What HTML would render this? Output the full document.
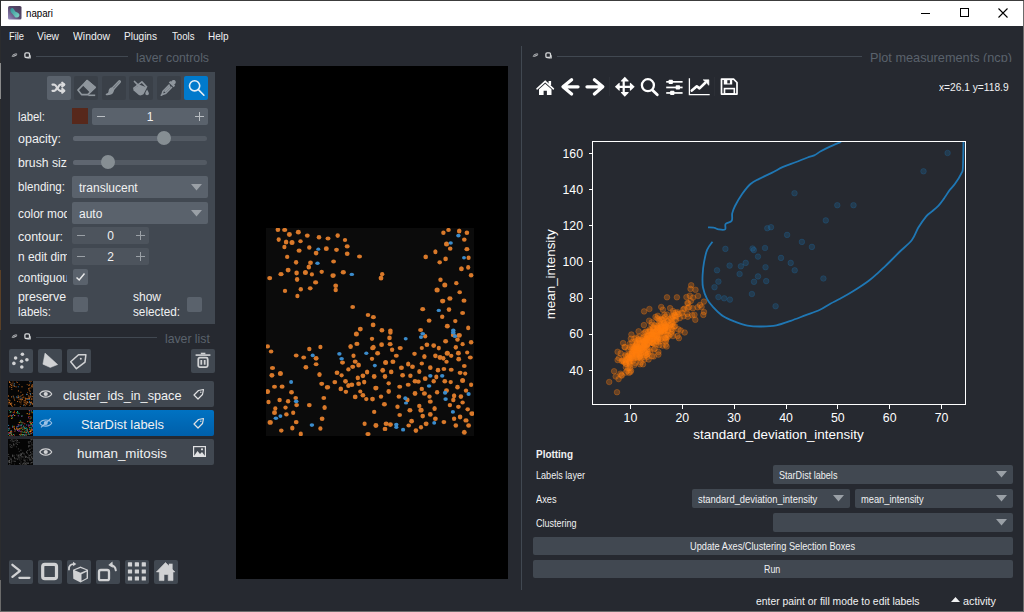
<!DOCTYPE html>
<html><head><meta charset="utf-8"><style>
*{margin:0;padding:0;box-sizing:border-box}
html,body{width:1024px;height:612px;overflow:hidden}
body{position:relative;background:#6b6b6b;font-family:"Liberation Sans",sans-serif;color:#f0f1f2;font-size:12px}
.a{position:absolute}
.t{position:absolute;white-space:nowrap;line-height:1}
svg{position:absolute;overflow:visible}
</style></head><body>
<!-- window -->
<div class="a" style="left:0;top:0;width:1024px;height:1px;background:#3c3c3c"></div>
<div class="a" style="left:1px;top:1px;width:1022px;height:610px;background:#262930"></div>
<div class="a" style="left:0;top:0;width:1px;height:580px;background:#2b2c2e"></div>
<div class="a" style="left:0;top:63px;width:1px;height:36px;background:#8a8a8a"></div>
<div class="a" style="left:0;top:270px;width:1px;height:60px;background:#5a4026"></div>
<!-- title bar -->
<div class="a" style="left:1px;top:1px;width:1022px;height:25px;background:#ffffff"></div>

<svg style="left:8px;top:6px" width="14" height="14" viewBox="0 0 14 14">
 <defs><linearGradient id="ng" x1="1" y1="0" x2="0" y2="1"><stop offset="0" stop-color="#4a3c58"/><stop offset="0.5" stop-color="#574a6e"/><stop offset="1" stop-color="#9a8fc4"/></linearGradient>
 <linearGradient id="nb" x1="0" y1="0" x2="1" y2="1"><stop offset="0" stop-color="#2f8f95"/><stop offset="1" stop-color="#7fd6c6"/></linearGradient></defs>
 <rect x="0" y="0" width="13.5" height="13.5" rx="1.6" fill="url(#ng)"/>
 <path d="M2.3,4.3 C2.2,2.5 4,1.6 5.2,2.4 C6.3,3.1 6.5,4.6 7.3,5.4 C8.2,6.2 10.6,6.3 11.3,8.2 C11.9,10 10.5,11.7 8.7,11.6 C7,11.5 6.2,10 5.4,8.9 C4.6,7.7 2.4,6.5 2.3,4.3Z" fill="url(#nb)"/>
</svg>
<div class="t" style="left:26.00px;top:7.69px;font-size:11px;line-height:11px;transform:scaleX(0.8831);transform-origin:0 0;color:#000;">napari</div>
<div class="a" style="left:921px;top:13px;width:9px;height:1px;background:#000"></div>
<div class="a" style="left:960px;top:8px;width:9px;height:9px;border:1px solid #000"></div>
<svg style="left:998px;top:8px" width="10" height="10" viewBox="0 0 10 10"><path d="M0.5,0.5 L9.5,9.5 M9.5,0.5 L0.5,9.5" stroke="#000" stroke-width="1.1"/></svg>

<!-- menu -->
<div class="t" style="left:9.00px;top:30.69px;font-size:11px;line-height:11px;transform:scaleX(0.8463);transform-origin:0 0;">File</div><div class="t" style="left:37.00px;top:30.69px;font-size:11px;line-height:11px;transform:scaleX(0.9305);transform-origin:0 0;">View</div><div class="t" style="left:73.00px;top:30.69px;font-size:11px;line-height:11px;transform:scaleX(0.9458);transform-origin:0 0;">Window</div><div class="t" style="left:124.00px;top:30.69px;font-size:11px;line-height:11px;transform:scaleX(0.9147);transform-origin:0 0;">Plugins</div><div class="t" style="left:171.50px;top:30.69px;font-size:11px;line-height:11px;transform:scaleX(0.8762);transform-origin:0 0;">Tools</div><div class="t" style="left:207.50px;top:30.69px;font-size:11px;line-height:11px;transform:scaleX(0.9062);transform-origin:0 0;">Help</div>
<svg style="left:11px;top:52px" width="7" height="6" viewBox="0 0 7 6"><path d="M0.6,4.6 C1.5,2 4.5,1 6.3,2 C5.8,4 3,5.2 0.6,4.6Z" fill="#c9cbce"/><path d="M1.5,3.6 L5.5,2.4" stroke="#262930" stroke-width="0.7"/></svg>
<svg style="left:24px;top:52px" width="7" height="7" viewBox="0 0 7 7"><rect x="0.9" y="0.9" width="4.6" height="4.6" rx="1.2" fill="none" stroke="#d8d9db" stroke-width="1.3"/><path d="M3.5,6 H6.3 V3.2" stroke="#c0c2c5" stroke-width="1.1" fill="none"/></svg>
<div class="a" style="left:36px;top:56px;width:92px;height:1px;background:#414851"></div><div class="a" style="left:0;top:40px;width:1024px;height:22px;overflow:hidden"><div class="t" style="left:136.00px;top:10.50px;font-size:13px;line-height:13px;transform:scaleX(0.9443);transform-origin:0 0;color:#5a626c;">layer controls</div></div><div class="a" style="left:10px;top:72px;width:204.5px;height:252px;background:#414851"></div><div class="a" style="left:47px;top:76px;width:24px;height:24px;background:#5a626c;border-radius:2px"></div><div class="a" style="left:74px;top:76px;width:24px;height:24px;background:#3a4048;border-radius:2px"></div><div class="a" style="left:102px;top:76px;width:24px;height:24px;background:#3a4048;border-radius:2px"></div><div class="a" style="left:129px;top:76px;width:24px;height:24px;background:#3a4048;border-radius:2px"></div><div class="a" style="left:157px;top:76px;width:24px;height:24px;background:#3a4048;border-radius:2px"></div><div class="a" style="left:184px;top:76px;width:24px;height:24px;background:#007acc;border-radius:2px"></div>
<svg style="left:47px;top:76px" width="24" height="24" viewBox="0 0 24 24" fill="none" stroke="#d9dadc" stroke-width="2.2" stroke-linecap="round" stroke-linejoin="round">
 <path d="M5.5,8.6 H7.3 C9.6,8.6 10.6,14.8 13.2,14.8 H17"/><path d="M5.5,14.8 H7.3 C8.4,14.8 9.1,13.6 9.7,12.4"/><path d="M11.3,10.9 C11.9,9.7 12.4,8.6 13.3,8.6 H17"/>
 <path d="M15.2,6.7 L17.3,8.6 L15.2,10.5 M15.2,12.9 L17.3,14.8 L15.2,16.7"/>
</svg>
<svg style="left:74.5px;top:76px" width="24" height="24" viewBox="0 0 24 24" fill="none" stroke="#8f969d" stroke-width="1.6" stroke-linejoin="round">
 <path d="M2.9,14.1 L12.1,4.6 L20.1,11.4 L12.8,18.6 L6.5,18.6 Z"/>
 <path d="M12.1,4.6 L20.1,11.4 L15.2,15.6 L8.7,9.2 Z" fill="#8f969d"/>
 <path d="M13.3,19.3 H20.2"/>
</svg>
<svg style="left:102px;top:76px" width="24" height="24" viewBox="0 0 24 24" fill="none" stroke="#8f969d" stroke-width="1.5" stroke-linejoin="round" stroke-linecap="round">
 <path d="M16.8,5.2 C17.6,4.4 18.8,5.4 18.1,6.3 L11.5,13.6 L10,12.3 Z"/>
 <path d="M10,12.3 C8,12.3 7.2,14 7.3,15.5 C7.2,17 6,18 4.4,18.4 C6.5,18.8 9.8,18 10.6,16.2 C11.1,15.2 11.4,14.3 11.5,13.6" fill="#8f969d"/>
</svg>
<svg style="left:129px;top:76px" width="24" height="24" viewBox="0 0 24 24" fill="#8f969d" stroke="none">
 <path d="M4.3,13 L10.8,8.8 L18,11.4 L14.5,18.3 C13,19.5 11,19.7 9.8,19.1 L4.6,14.6 Z"/>
 <path d="M4.3,12.6 L12.9,5.9 L18,11.4" fill="none" stroke="#8f969d" stroke-width="1.6" stroke-linejoin="round"/>
 <path d="M5.5,5.5 L11.4,11.4" stroke="#8f969d" stroke-width="1.7" stroke-linecap="round"/>
 <path d="M18.1,13.6 C17.2,15.4 16.3,16.6 16.3,17.6 C16.3,18.6 17.1,19.2 18.1,19.2 C19.1,19.2 19.9,18.6 19.9,17.6 C19.9,16.6 19,15.4 18.1,13.6Z"/>
</svg>
<svg style="left:157.3px;top:76px" width="24" height="24" viewBox="0 0 24 24" fill="#8f969d" stroke="none">
 <path d="M14.6,4.9 C15.6,3.5 18,3.6 18.6,5.2 C19.3,6.8 18.2,8 17.2,8.6 L18.1,9.7 L16.6,11.2 L11.8,6.6 L13.3,5.1 L14.1,5.8Z"/>
 <path d="M12.6,8.6 L6,15.2 L5,18.4 L4.3,19.3 L5.3,18.6 L8.4,17.6 L15,11" fill="none" stroke="#8f969d" stroke-width="1.6" stroke-linejoin="round"/>
 <path d="M12.6,9.6 L7,15.2 L8.3,16.5 L14,10.9Z"/>
</svg>
<svg style="left:184px;top:76px" width="24" height="24" viewBox="0 0 24 24" fill="none" stroke="#e6eef6" stroke-width="1.6" stroke-linecap="round">
 <circle cx="10.6" cy="9.8" r="5.1"/>
 <path d="M14.4,13.6 L19.9,19.2"/>
</svg>
<div class="t" style="left:18.00px;top:111.14px;font-size:12px;line-height:12px;transform:scaleX(0.9412);transform-origin:0 0;">label:</div><div class="a" style="left:72px;top:108px;width:16px;height:16px;background:#57281b"></div><div class="a" style="left:92px;top:108px;width:116px;height:17px;background:#5a626c;border-radius:2px"></div>
<div class="a" style="left:96.5px;top:116px;width:8px;height:1px;background:#b9bec3"></div><div class="t" style="left:146.66px;top:110.84px;font-size:12px;line-height:12px;transform:scaleX(1.0000);transform-origin:0 0;">1</div>
<div class="a" style="left:195px;top:116px;width:9px;height:1px;background:#b9bec3"></div>
<div class="a" style="left:199px;top:112px;width:1px;height:9px;background:#b9bec3"></div><div class="t" style="left:18.00px;top:132.84px;font-size:12px;line-height:12px;transform:scaleX(1.0398);transform-origin:0 0;">opacity:</div><div class="a" style="left:73px;top:136px;width:134px;height:5px;background:#535a63;border-radius:3px"></div>
<div class="a" style="left:73px;top:136px;width:91px;height:5px;background:#5f6670;border-radius:3px"></div>
<div class="a" style="left:157px;top:131px;width:14px;height:14px;background:#868e93;border-radius:50%"></div><div class="a" style="left:18px;top:150px;width:49px;height:22px;overflow:hidden"><div class="t" style="left:0.00px;top:6.84px;font-size:12px;line-height:12px;transform:scaleX(1.0169);transform-origin:0 0;">brush size:</div></div><div class="a" style="left:73px;top:160px;width:134px;height:5px;background:#535a63;border-radius:3px"></div>
<div class="a" style="left:73px;top:160px;width:35px;height:5px;background:#5f6670;border-radius:3px"></div>
<div class="a" style="left:101px;top:155px;width:14px;height:14px;background:#868e93;border-radius:50%"></div><div class="t" style="left:18.00px;top:181.34px;font-size:12px;line-height:12px;transform:scaleX(0.9650);transform-origin:0 0;">blending:</div><div class="a" style="left:72px;top:176px;width:136px;height:22px;background:#5a626c;border-radius:2px"></div>
<svg style="left:191px;top:184px" width="11" height="7" viewBox="0 0 11 7"><path d="M0,0 H11 L5.5,6.5Z" fill="#9aa0a6"/></svg><div class="t" style="left:79.00px;top:182.24px;font-size:12px;line-height:12px;transform:scaleX(1.0000);transform-origin:0 0;color:#f0f1f2;">translucent</div><div class="a" style="left:18px;top:201px;width:49px;height:22px;overflow:hidden"><div class="t" style="left:0.00px;top:6.84px;font-size:12px;line-height:12px;transform:scaleX(0.9890);transform-origin:0 0;">color mode:</div></div><div class="a" style="left:72px;top:202px;width:136px;height:22px;background:#5a626c;border-radius:2px"></div>
<svg style="left:191px;top:210px" width="11" height="7" viewBox="0 0 11 7"><path d="M0,0 H11 L5.5,6.5Z" fill="#9aa0a6"/></svg><div class="t" style="left:79.00px;top:207.84px;font-size:12px;line-height:12px;transform:scaleX(1.0000);transform-origin:0 0;color:#f0f1f2;">auto</div><div class="t" style="left:18.00px;top:230.54px;font-size:12px;line-height:12px;transform:scaleX(1.0379);transform-origin:0 0;">contour:</div><div class="a" style="left:72px;top:227px;width:77px;height:17px;background:#4d545d;border-radius:2px"></div>
<div class="a" style="left:76.5px;top:235px;width:8px;height:1px;background:#9aa0a6"></div><div class="t" style="left:107.16px;top:230.34px;font-size:12px;line-height:12px;transform:scaleX(1.0000);transform-origin:0 0;">0</div>
<div class="a" style="left:136px;top:235px;width:9px;height:1px;background:#9aa0a6"></div>
<div class="a" style="left:140px;top:231px;width:1px;height:9px;background:#9aa0a6"></div><div class="a" style="left:18px;top:244px;width:49px;height:22px;overflow:hidden"><div class="t" style="left:0.00px;top:7.14px;font-size:12px;line-height:12px;transform:scaleX(0.9936);transform-origin:0 0;">n edit dim:</div></div><div class="a" style="left:72px;top:248px;width:77px;height:17px;background:#4d545d;border-radius:2px"></div>
<div class="a" style="left:76.5px;top:256px;width:8px;height:1px;background:#9aa0a6"></div><div class="t" style="left:107.16px;top:251.34px;font-size:12px;line-height:12px;transform:scaleX(1.0000);transform-origin:0 0;">2</div>
<div class="a" style="left:136px;top:256px;width:9px;height:1px;background:#9aa0a6"></div>
<div class="a" style="left:140px;top:252px;width:1px;height:9px;background:#9aa0a6"></div><div class="a" style="left:18px;top:265px;width:49px;height:22px;overflow:hidden"><div class="t" style="left:0.00px;top:6.84px;font-size:12px;line-height:12px;transform:scaleX(0.9776);transform-origin:0 0;">contiguous:</div></div><div class="a" style="left:73px;top:269px;width:15px;height:16px;background:#5a626c;border-radius:2px"></div><svg style="left:73px;top:269px" width="15" height="16" viewBox="0 0 15 16"><path d="M3.5,8.5 L6.2,11 L11.5,4.5" stroke="#e8e9ea" stroke-width="1.5" fill="none"/></svg><div class="t" style="left:18.00px;top:291.04px;font-size:12px;line-height:12px;transform:scaleX(1.0282);transform-origin:0 0;">preserve</div><div class="t" style="left:18.00px;top:306.34px;font-size:12px;line-height:12px;transform:scaleX(0.9514);transform-origin:0 0;">labels:</div><div class="a" style="left:73px;top:297px;width:15px;height:15px;background:#5a626c;border-radius:2px"></div><div class="t" style="left:133.00px;top:291.04px;font-size:12px;line-height:12px;transform:scaleX(0.9996);transform-origin:0 0;">show</div><div class="t" style="left:133.00px;top:306.34px;font-size:12px;line-height:12px;transform:scaleX(0.9786);transform-origin:0 0;">selected:</div><div class="a" style="left:187px;top:297px;width:15px;height:15px;background:#5a626c;border-radius:2px"></div><svg style="left:11px;top:333px" width="7" height="6" viewBox="0 0 7 6"><path d="M0.6,4.6 C1.5,2 4.5,1 6.3,2 C5.8,4 3,5.2 0.6,4.6Z" fill="#c9cbce"/><path d="M1.5,3.6 L5.5,2.4" stroke="#262930" stroke-width="0.7"/></svg>
<svg style="left:24px;top:333px" width="7" height="7" viewBox="0 0 7 7"><rect x="0.9" y="0.9" width="4.6" height="4.6" rx="1.2" fill="none" stroke="#d8d9db" stroke-width="1.3"/><path d="M3.5,6 H6.3 V3.2" stroke="#c0c2c5" stroke-width="1.1" fill="none"/></svg>
<div class="a" style="left:36px;top:337px;width:121px;height:1px;background:#414851"></div><div class="a" style="left:0;top:321px;width:1024px;height:22px;overflow:hidden"><div class="t" style="left:164.70px;top:10.50px;font-size:13px;line-height:13px;transform:scaleX(0.9397);transform-origin:0 0;color:#5a626c;">layer list</div></div><div class="a" style="left:9px;top:349px;width:24px;height:24px;background:#414851;border-radius:2px"></div><div class="a" style="left:38px;top:349px;width:24px;height:24px;background:#414851;border-radius:2px"></div><div class="a" style="left:67px;top:349px;width:24px;height:24px;background:#414851;border-radius:2px"></div><div class="a" style="left:191px;top:349px;width:24px;height:24px;background:#414851;border-radius:2px"></div>
<svg style="left:9px;top:349px" width="24" height="24" viewBox="0 0 24 24" fill="#d1d2d4">
 <circle cx="13.4" cy="5.3" r="1.8"/><circle cx="6.6" cy="9" r="1.8"/><circle cx="17.9" cy="10.7" r="1.8"/><circle cx="12.6" cy="12.3" r="1.8"/><circle cx="4.9" cy="14.4" r="1.8"/><circle cx="12.8" cy="18" r="1.8"/>
</svg>
<svg style="left:38px;top:349px" width="24" height="24" viewBox="0 0 24 24"><path d="M7,4.1 L19.7,15.6 L12.3,18.5 L4.9,15.2 Z" fill="#d1d2d4" stroke="#d1d2d4" stroke-width="0.5" stroke-linejoin="round"/></svg>
<svg style="left:67px;top:349px" width="24" height="24" viewBox="0 0 24 24" fill="none" stroke="#d1d2d4" stroke-width="1.5" stroke-linejoin="round">
 <path d="M3.7,12.7 L11.5,5.7 L18.9,5.7 L18,13.1 L9.4,19.7 Z"/><circle cx="13.8" cy="9.8" r="1" fill="#d1d2d4" stroke="none"/>
</svg>
<svg style="left:191.4px;top:349px" width="24" height="24" viewBox="0 0 24 24" fill="none" stroke="#d1d2d4">
 <path d="M4.6,6.1 H19.4" stroke-width="1.6"/><path d="M9.8,4.5 H14.4" stroke-width="1.6"/><rect x="7.3" y="8.7" width="9.4" height="9.4" rx="1.5" stroke-width="1.8"/><path d="M10.3,11 V15.8 M13.7,11 V15.8" stroke-width="1.8"/>
</svg>
<div class="a" style="left:33px;top:381px;width:181px;height:26px;background:#414851;border-radius:0 2px 2px 0"></div><div class="a" style="left:8px;top:381px;width:25px;height:26px;background:#050505;overflow:hidden"><svg style="left:0;top:0" width="25" height="26" viewBox="0 0 25 26"><rect x="0.9" y="-0.3" width="1" height="1" fill="#d9792a"/><rect x="4.5" y="0.5" width="1" height="1" fill="#8a4a16"/><rect x="8.1" y="0.5" width="1" height="1" fill="#8a4a16"/><rect x="9.0" y="1.0" width="1" height="1" fill="#8a4a16"/><rect x="1.0" y="0.9" width="1" height="1" fill="#d9792a"/><rect x="1.9" y="1.2" width="1" height="1" fill="#8a4a16"/><rect x="3.5" y="2.3" width="1" height="1" fill="#b8641f"/><rect x="5.5" y="2.6" width="1" height="1" fill="#8a4a16"/><rect x="10.7" y="3.1" width="1" height="1" fill="#8a4a16"/><rect x="2.1" y="3.1" width="1" height="1" fill="#b8641f"/><rect x="3.1" y="3.8" width="1" height="1" fill="#d9792a"/><rect x="4.6" y="4.4" width="1" height="1" fill="#b8641f"/><rect x="1.3" y="5.3" width="1" height="1" fill="#b8641f"/><rect x="6.2" y="5.0" width="1" height="1" fill="#b8641f"/><rect x="7.6" y="5.4" width="1" height="1" fill="#b8641f"/><rect x="3.2" y="5.9" width="1" height="1" fill="#d9792a"/><rect x="3.3" y="8.0" width="1" height="1" fill="#8a4a16"/><rect x="9.9" y="9.4" width="1" height="1" fill="#d9792a"/><rect x="5.8" y="2.2" width="1" height="1" fill="#2f6fa0"/><rect x="5.7" y="3.9" width="1" height="1" fill="#2f6fa0"/><rect x="9.8" y="5.3" width="1" height="1" fill="#2f6fa0"/><rect x="21.4" y="-0.2" width="1" height="1" fill="#d9792a"/><rect x="22.7" y="-0.1" width="1" height="1" fill="#8a4a16"/><rect x="18.7" y="3.1" width="1" height="1" fill="#8a4a16"/><rect x="21.1" y="3.4" width="1" height="1" fill="#b8641f"/><rect x="20.4" y="3.8" width="1" height="1" fill="#d9792a"/><rect x="23.8" y="3.2" width="1" height="1" fill="#b8641f"/><rect x="23.0" y="4.6" width="1" height="1" fill="#d9792a"/><rect x="23.8" y="4.4" width="1" height="1" fill="#b8641f"/><rect x="24.2" y="5.4" width="1" height="1" fill="#b8641f"/><rect x="13.5" y="5.3" width="1" height="1" fill="#d9792a"/><rect x="21.0" y="6.6" width="1" height="1" fill="#8a4a16"/><rect x="22.4" y="6.4" width="1" height="1" fill="#b8641f"/><rect x="20.1" y="7.3" width="1" height="1" fill="#d9792a"/><rect x="20.7" y="8.6" width="1" height="1" fill="#b8641f"/><rect x="21.5" y="9.7" width="1" height="1" fill="#d9792a"/><rect x="19.1" y="11.1" width="1" height="1" fill="#8a4a16"/><rect x="21.3" y="11.8" width="1" height="1" fill="#8a4a16"/><rect x="23.8" y="12.0" width="1" height="1" fill="#8a4a16"/><rect x="12.4" y="10.7" width="1" height="1" fill="#b8641f"/><rect x="21.7" y="1.4" width="1" height="1" fill="#2f6fa0"/><rect x="22.0" y="12.3" width="1" height="1" fill="#2f6fa0"/><rect x="-0.3" y="14.3" width="1" height="1" fill="#d9792a"/><rect x="0.1" y="14.9" width="1" height="1" fill="#8a4a16"/><rect x="4.7" y="14.6" width="1" height="1" fill="#b8641f"/><rect x="3.1" y="15.4" width="1" height="1" fill="#d9792a"/><rect x="5.5" y="16.5" width="1" height="1" fill="#b8641f"/><rect x="0.2" y="17.9" width="1" height="1" fill="#b8641f"/><rect x="5.9" y="17.8" width="1" height="1" fill="#8a4a16"/><rect x="9.7" y="14.3" width="1" height="1" fill="#b8641f"/><rect x="10.0" y="15.5" width="1" height="1" fill="#b8641f"/><rect x="10.2" y="16.2" width="1" height="1" fill="#d9792a"/><rect x="8.7" y="16.3" width="1" height="1" fill="#b8641f"/><rect x="11.7" y="17.5" width="1" height="1" fill="#d9792a"/><rect x="10.5" y="18.2" width="1" height="1" fill="#8a4a16"/><rect x="6.2" y="19.0" width="1" height="1" fill="#8a4a16"/><rect x="9.1" y="20.0" width="1" height="1" fill="#b8641f"/><rect x="0.5" y="19.3" width="1" height="1" fill="#b8641f"/><rect x="1.4" y="19.3" width="1" height="1" fill="#d9792a"/><rect x="11.1" y="20.4" width="1" height="1" fill="#b8641f"/><rect x="-0.2" y="21.3" width="1" height="1" fill="#b8641f"/><rect x="1.1" y="21.0" width="1" height="1" fill="#d9792a"/><rect x="3.2" y="21.6" width="1" height="1" fill="#d9792a"/><rect x="1.8" y="22.0" width="1" height="1" fill="#d9792a"/><rect x="0.5" y="22.6" width="1" height="1" fill="#b8641f"/><rect x="2.0" y="22.8" width="1" height="1" fill="#d9792a"/><rect x="2.8" y="22.6" width="1" height="1" fill="#b8641f"/><rect x="6.2" y="23.3" width="1" height="1" fill="#d9792a"/><rect x="3.1" y="23.8" width="1" height="1" fill="#d9792a"/><rect x="3.7" y="25.2" width="1" height="1" fill="#b8641f"/><rect x="11.8" y="25.2" width="1" height="1" fill="#b8641f"/><rect x="5.1" y="15.4" width="1" height="1" fill="#2f6fa0"/><rect x="8.3" y="15.2" width="1" height="1" fill="#2f6fa0"/><rect x="8.6" y="15.9" width="1" height="1" fill="#2f6fa0"/><rect x="11.5" y="15.2" width="1" height="1" fill="#2f6fa0"/><rect x="14.3" y="13.2" width="1" height="1" fill="#d9792a"/><rect x="13.4" y="14.1" width="1" height="1" fill="#8a4a16"/><rect x="12.3" y="14.5" width="1" height="1" fill="#8a4a16"/><rect x="15.2" y="15.5" width="1" height="1" fill="#8a4a16"/><rect x="13.9" y="16.3" width="1" height="1" fill="#8a4a16"/><rect x="14.8" y="16.2" width="1" height="1" fill="#8a4a16"/><rect x="16.6" y="16.5" width="1" height="1" fill="#8a4a16"/><rect x="17.1" y="16.9" width="1" height="1" fill="#b8641f"/><rect x="13.5" y="17.3" width="1" height="1" fill="#8a4a16"/><rect x="12.5" y="18.1" width="1" height="1" fill="#d9792a"/><rect x="13.8" y="18.1" width="1" height="1" fill="#d9792a"/><rect x="16.9" y="18.0" width="1" height="1" fill="#8a4a16"/><rect x="17.9" y="17.4" width="1" height="1" fill="#d9792a"/><rect x="20.3" y="14.5" width="1" height="1" fill="#d9792a"/><rect x="20.4" y="15.7" width="1" height="1" fill="#8a4a16"/><rect x="20.8" y="15.8" width="1" height="1" fill="#8a4a16"/><rect x="21.8" y="15.5" width="1" height="1" fill="#d9792a"/><rect x="23.3" y="16.7" width="1" height="1" fill="#8a4a16"/><rect x="23.7" y="15.0" width="1" height="1" fill="#b8641f"/><rect x="22.3" y="14.4" width="1" height="1" fill="#b8641f"/><rect x="18.6" y="13.0" width="1" height="1" fill="#b8641f"/><rect x="19.3" y="17.0" width="1" height="1" fill="#b8641f"/><rect x="20.2" y="17.3" width="1" height="1" fill="#b8641f"/><rect x="20.9" y="17.1" width="1" height="1" fill="#d9792a"/><rect x="22.8" y="17.6" width="1" height="1" fill="#b8641f"/><rect x="23.4" y="17.7" width="1" height="1" fill="#b8641f"/><rect x="22.9" y="20.6" width="1" height="1" fill="#d9792a"/><rect x="16.6" y="19.1" width="1" height="1" fill="#d9792a"/><rect x="15.6" y="19.3" width="1" height="1" fill="#b8641f"/><rect x="12.7" y="19.5" width="1" height="1" fill="#b8641f"/><rect x="12.3" y="20.9" width="1" height="1" fill="#8a4a16"/><rect x="15.5" y="20.6" width="1" height="1" fill="#8a4a16"/><rect x="16.5" y="21.0" width="1" height="1" fill="#b8641f"/><rect x="17.4" y="20.2" width="1" height="1" fill="#8a4a16"/><rect x="18.5" y="20.2" width="1" height="1" fill="#8a4a16"/><rect x="19.1" y="20.6" width="1" height="1" fill="#d9792a"/><rect x="19.3" y="21.2" width="1" height="1" fill="#d9792a"/><rect x="21.2" y="19.8" width="1" height="1" fill="#b8641f"/><rect x="23.1" y="21.3" width="1" height="1" fill="#b8641f"/><rect x="21.6" y="21.6" width="1" height="1" fill="#b8641f"/><rect x="23.7" y="22.2" width="1" height="1" fill="#d9792a"/><rect x="24.3" y="22.7" width="1" height="1" fill="#d9792a"/><rect x="17.9" y="21.7" width="1" height="1" fill="#d9792a"/><rect x="16.8" y="22.3" width="1" height="1" fill="#8a4a16"/><rect x="12.5" y="22.5" width="1" height="1" fill="#8a4a16"/><rect x="15.6" y="22.9" width="1" height="1" fill="#d9792a"/><rect x="18.3" y="23.0" width="1" height="1" fill="#8a4a16"/><rect x="22.1" y="23.3" width="1" height="1" fill="#8a4a16"/><rect x="16.7" y="24.2" width="1" height="1" fill="#b8641f"/><rect x="20.9" y="23.8" width="1" height="1" fill="#8a4a16"/><rect x="22.0" y="21.0" width="1" height="1" fill="#b8641f"/><rect x="22.0" y="12.9" width="1" height="1" fill="#b8641f"/><rect x="18.1" y="13.1" width="1" height="1" fill="#2f6fa0"/><rect x="18.3" y="12.7" width="1" height="1" fill="#2f6fa0"/><rect x="12.6" y="16.7" width="1" height="1" fill="#2f6fa0"/><rect x="19.3" y="18.0" width="1" height="1" fill="#2f6fa0"/><rect x="20.7" y="18.0" width="1" height="1" fill="#2f6fa0"/><rect x="21.0" y="20.1" width="1" height="1" fill="#2f6fa0"/><rect x="21.1" y="20.9" width="1" height="1" fill="#2f6fa0"/><rect x="22.0" y="22.5" width="1" height="1" fill="#2f6fa0"/><rect x="15.2" y="24.1" width="1" height="1" fill="#2f6fa0"/><rect x="22.0" y="12.6" width="1" height="1" fill="#2f6fa0"/></svg></div><div class="t" style="left:62.75px;top:388.80px;font-size:13px;line-height:13px;transform:scaleX(0.9761);transform-origin:0 0;">cluster_ids_in_space</div><svg style="left:39px;top:388px" width="14" height="12" viewBox="0 0 14 12" fill="none" stroke="#d1d2d4" stroke-width="1.2"><path d="M0.8,6 C3,1.8 10.5,1.8 12.7,6 C10.5,10.2 3,10.2 0.8,6Z"/><circle cx="6.75" cy="6" r="2.1" fill="#d1d2d4" stroke="none"/></svg><svg style="left:193px;top:388px" width="12" height="12" viewBox="0 0 12 12" fill="none" stroke="#e0e1e3" stroke-width="1.2" stroke-linejoin="round"><path d="M1,7 L5.5,2.5 L10.5,1.5 L9.5,6.5 L5,11 Z"/><circle cx="7.8" cy="4.2" r="0.7" fill="#e0e1e3" stroke="none"/></svg><div class="a" style="left:33px;top:410px;width:181px;height:26px;background:linear-gradient(#0072c2,#005fa9);border-radius:0 2px 2px 0"></div><div class="a" style="left:8px;top:410px;width:25px;height:26px;background:#050505;overflow:hidden"><svg style="left:0;top:0" width="25" height="26" viewBox="0 0 25 26"><rect x="0.9" y="-0.3" width="1" height="1" fill="#16a085"/><rect x="5.9" y="0.7" width="1" height="1" fill="#d35400"/><rect x="9.0" y="1.0" width="1" height="1" fill="#16a085"/><rect x="1.9" y="1.2" width="1" height="1" fill="#e74c3c"/><rect x="2.6" y="1.3" width="1" height="1" fill="#27ae60"/><rect x="1.7" y="1.9" width="1" height="1" fill="#27ae60"/><rect x="4.7" y="1.9" width="1" height="1" fill="#c0392b"/><rect x="8.0" y="2.2" width="1" height="1" fill="#d35400"/><rect x="9.3" y="1.8" width="1" height="1" fill="#16a085"/><rect x="9.3" y="2.7" width="1" height="1" fill="#27ae60"/><rect x="10.7" y="3.1" width="1" height="1" fill="#27ae60"/><rect x="4.9" y="3.9" width="1" height="1" fill="#8e44ad"/><rect x="2.2" y="4.8" width="1" height="1" fill="#16a085"/><rect x="1.3" y="5.3" width="1" height="1" fill="#d35400"/><rect x="3.2" y="5.1" width="1" height="1" fill="#e74c3c"/><rect x="4.2" y="5.1" width="1" height="1" fill="#2e86c1"/><rect x="6.2" y="5.0" width="1" height="1" fill="#f39c12"/><rect x="-0.1" y="5.8" width="1" height="1" fill="#d35400"/><rect x="3.2" y="5.9" width="1" height="1" fill="#c0392b"/><rect x="3.7" y="7.1" width="1" height="1" fill="#27ae60"/><rect x="3.3" y="8.0" width="1" height="1" fill="#f39c12"/><rect x="11.8" y="10.4" width="1" height="1" fill="#16a085"/><rect x="10.8" y="12.1" width="1" height="1" fill="#f39c12"/><rect x="5.8" y="2.2" width="1" height="1" fill="#d35400"/><rect x="9.8" y="5.3" width="1" height="1" fill="#8e44ad"/><rect x="20.8" y="0.1" width="1" height="1" fill="#e74c3c"/><rect x="22.7" y="-0.1" width="1" height="1" fill="#8e44ad"/><rect x="23.3" y="0.9" width="1" height="1" fill="#27ae60"/><rect x="21.2" y="1.5" width="1" height="1" fill="#2e86c1"/><rect x="23.6" y="2.2" width="1" height="1" fill="#f39c12"/><rect x="18.7" y="3.1" width="1" height="1" fill="#f39c12"/><rect x="21.1" y="3.4" width="1" height="1" fill="#f39c12"/><rect x="20.4" y="3.8" width="1" height="1" fill="#c0392b"/><rect x="13.5" y="5.3" width="1" height="1" fill="#27ae60"/><rect x="13.3" y="5.8" width="1" height="1" fill="#8e44ad"/><rect x="20.5" y="6.0" width="1" height="1" fill="#d35400"/><rect x="22.4" y="6.4" width="1" height="1" fill="#d35400"/><rect x="20.1" y="7.3" width="1" height="1" fill="#8e44ad"/><rect x="22.8" y="7.5" width="1" height="1" fill="#27ae60"/><rect x="21.6" y="8.3" width="1" height="1" fill="#e74c3c"/><rect x="20.7" y="10.6" width="1" height="1" fill="#d35400"/><rect x="19.1" y="11.1" width="1" height="1" fill="#e74c3c"/><rect x="22.3" y="11.1" width="1" height="1" fill="#27ae60"/><rect x="21.3" y="11.8" width="1" height="1" fill="#16a085"/><rect x="23.8" y="12.0" width="1" height="1" fill="#e74c3c"/><rect x="12.4" y="11.6" width="1" height="1" fill="#f39c12"/><rect x="13.4" y="12.3" width="1" height="1" fill="#27ae60"/><rect x="14.5" y="12.4" width="1" height="1" fill="#e74c3c"/><rect x="22.0" y="12.3" width="1" height="1" fill="#e74c3c"/><rect x="0.1" y="14.9" width="1" height="1" fill="#2e86c1"/><rect x="4.0" y="15.7" width="1" height="1" fill="#16a085"/><rect x="5.5" y="15.8" width="1" height="1" fill="#f39c12"/><rect x="5.5" y="16.5" width="1" height="1" fill="#d35400"/><rect x="4.3" y="16.9" width="1" height="1" fill="#8e44ad"/><rect x="1.2" y="17.7" width="1" height="1" fill="#e74c3c"/><rect x="0.2" y="17.9" width="1" height="1" fill="#2e86c1"/><rect x="5.9" y="17.8" width="1" height="1" fill="#f39c12"/><rect x="9.7" y="14.3" width="1" height="1" fill="#8e44ad"/><rect x="10.4" y="14.0" width="1" height="1" fill="#c0392b"/><rect x="10.0" y="15.5" width="1" height="1" fill="#2e86c1"/><rect x="8.7" y="16.3" width="1" height="1" fill="#2e86c1"/><rect x="8.0" y="17.6" width="1" height="1" fill="#f39c12"/><rect x="8.6" y="17.9" width="1" height="1" fill="#d35400"/><rect x="11.1" y="18.0" width="1" height="1" fill="#d35400"/><rect x="10.5" y="18.2" width="1" height="1" fill="#e74c3c"/><rect x="11.3" y="18.8" width="1" height="1" fill="#27ae60"/><rect x="9.8" y="19.1" width="1" height="1" fill="#d35400"/><rect x="9.1" y="18.7" width="1" height="1" fill="#16a085"/><rect x="9.4" y="19.2" width="1" height="1" fill="#e74c3c"/><rect x="7.8" y="18.8" width="1" height="1" fill="#c0392b"/><rect x="6.2" y="19.0" width="1" height="1" fill="#c0392b"/><rect x="6.9" y="19.4" width="1" height="1" fill="#16a085"/><rect x="9.1" y="20.0" width="1" height="1" fill="#8e44ad"/><rect x="0.5" y="19.3" width="1" height="1" fill="#16a085"/><rect x="-0.3" y="19.9" width="1" height="1" fill="#16a085"/><rect x="2.6" y="20.0" width="1" height="1" fill="#2e86c1"/><rect x="3.1" y="20.7" width="1" height="1" fill="#c0392b"/><rect x="11.1" y="20.4" width="1" height="1" fill="#8e44ad"/><rect x="10.2" y="20.6" width="1" height="1" fill="#8e44ad"/><rect x="6.4" y="20.7" width="1" height="1" fill="#e74c3c"/><rect x="2.2" y="21.2" width="1" height="1" fill="#f39c12"/><rect x="3.2" y="21.6" width="1" height="1" fill="#e74c3c"/><rect x="1.8" y="22.0" width="1" height="1" fill="#2e86c1"/><rect x="0.6" y="22.1" width="1" height="1" fill="#e74c3c"/><rect x="0.5" y="22.6" width="1" height="1" fill="#e74c3c"/><rect x="2.0" y="22.8" width="1" height="1" fill="#d35400"/><rect x="2.8" y="22.6" width="1" height="1" fill="#27ae60"/><rect x="3.1" y="23.8" width="1" height="1" fill="#f39c12"/><rect x="0.0" y="23.8" width="1" height="1" fill="#16a085"/><rect x="2.7" y="24.5" width="1" height="1" fill="#2e86c1"/><rect x="6.0" y="24.6" width="1" height="1" fill="#c0392b"/><rect x="1.3" y="24.8" width="1" height="1" fill="#f39c12"/><rect x="3.7" y="25.2" width="1" height="1" fill="#e74c3c"/><rect x="11.3" y="24.0" width="1" height="1" fill="#e74c3c"/><rect x="11.8" y="25.2" width="1" height="1" fill="#16a085"/><rect x="8.6" y="15.9" width="1" height="1" fill="#8e44ad"/><rect x="11.5" y="15.2" width="1" height="1" fill="#2e86c1"/><rect x="1.2" y="23.0" width="1" height="1" fill="#8e44ad"/><rect x="5.0" y="24.1" width="1" height="1" fill="#27ae60"/><rect x="13.4" y="14.1" width="1" height="1" fill="#27ae60"/><rect x="12.3" y="14.5" width="1" height="1" fill="#16a085"/><rect x="12.9" y="15.2" width="1" height="1" fill="#8e44ad"/><rect x="15.2" y="15.5" width="1" height="1" fill="#2e86c1"/><rect x="14.8" y="16.2" width="1" height="1" fill="#16a085"/><rect x="15.8" y="17.0" width="1" height="1" fill="#27ae60"/><rect x="16.6" y="16.5" width="1" height="1" fill="#c0392b"/><rect x="13.5" y="17.3" width="1" height="1" fill="#27ae60"/><rect x="14.6" y="17.5" width="1" height="1" fill="#c0392b"/><rect x="12.5" y="18.1" width="1" height="1" fill="#f39c12"/><rect x="15.9" y="17.9" width="1" height="1" fill="#16a085"/><rect x="16.9" y="18.0" width="1" height="1" fill="#2e86c1"/><rect x="17.9" y="17.4" width="1" height="1" fill="#16a085"/><rect x="18.2" y="14.5" width="1" height="1" fill="#2e86c1"/><rect x="20.3" y="14.5" width="1" height="1" fill="#8e44ad"/><rect x="19.9" y="15.5" width="1" height="1" fill="#8e44ad"/><rect x="21.3" y="15.2" width="1" height="1" fill="#e74c3c"/><rect x="23.3" y="16.7" width="1" height="1" fill="#16a085"/><rect x="23.7" y="15.0" width="1" height="1" fill="#8e44ad"/><rect x="24.0" y="15.7" width="1" height="1" fill="#8e44ad"/><rect x="24.2" y="13.8" width="1" height="1" fill="#16a085"/><rect x="23.1" y="14.0" width="1" height="1" fill="#16a085"/><rect x="22.3" y="14.4" width="1" height="1" fill="#16a085"/><rect x="22.5" y="13.5" width="1" height="1" fill="#d35400"/><rect x="22.7" y="12.9" width="1" height="1" fill="#f39c12"/><rect x="20.9" y="17.1" width="1" height="1" fill="#d35400"/><rect x="21.8" y="17.2" width="1" height="1" fill="#27ae60"/><rect x="23.4" y="17.7" width="1" height="1" fill="#2e86c1"/><rect x="23.1" y="18.6" width="1" height="1" fill="#d35400"/><rect x="24.2" y="19.1" width="1" height="1" fill="#8e44ad"/><rect x="22.5" y="19.4" width="1" height="1" fill="#f39c12"/><rect x="23.5" y="19.8" width="1" height="1" fill="#f39c12"/><rect x="22.9" y="20.6" width="1" height="1" fill="#c0392b"/><rect x="22.1" y="20.5" width="1" height="1" fill="#f39c12"/><rect x="21.0" y="18.7" width="1" height="1" fill="#16a085"/><rect x="18.6" y="18.3" width="1" height="1" fill="#27ae60"/><rect x="17.8" y="18.7" width="1" height="1" fill="#27ae60"/><rect x="15.6" y="19.3" width="1" height="1" fill="#d35400"/><rect x="14.2" y="18.9" width="1" height="1" fill="#27ae60"/><rect x="13.3" y="20.6" width="1" height="1" fill="#d35400"/><rect x="12.3" y="20.9" width="1" height="1" fill="#8e44ad"/><rect x="13.7" y="21.5" width="1" height="1" fill="#27ae60"/><rect x="17.4" y="20.2" width="1" height="1" fill="#16a085"/><rect x="18.5" y="20.2" width="1" height="1" fill="#16a085"/><rect x="19.1" y="20.6" width="1" height="1" fill="#8e44ad"/><rect x="19.3" y="21.2" width="1" height="1" fill="#27ae60"/><rect x="21.6" y="21.6" width="1" height="1" fill="#c0392b"/><rect x="23.7" y="22.2" width="1" height="1" fill="#e74c3c"/><rect x="19.8" y="22.1" width="1" height="1" fill="#16a085"/><rect x="17.9" y="21.7" width="1" height="1" fill="#e74c3c"/><rect x="18.1" y="22.3" width="1" height="1" fill="#e74c3c"/><rect x="16.8" y="22.3" width="1" height="1" fill="#16a085"/><rect x="15.3" y="21.8" width="1" height="1" fill="#27ae60"/><rect x="12.5" y="22.5" width="1" height="1" fill="#d35400"/><rect x="19.9" y="23.3" width="1" height="1" fill="#16a085"/><rect x="22.1" y="23.3" width="1" height="1" fill="#d35400"/><rect x="22.8" y="23.1" width="1" height="1" fill="#2e86c1"/><rect x="16.7" y="24.2" width="1" height="1" fill="#16a085"/><rect x="14.5" y="24.1" width="1" height="1" fill="#e74c3c"/><rect x="12.7" y="24.2" width="1" height="1" fill="#f39c12"/><rect x="13.9" y="24.0" width="1" height="1" fill="#16a085"/><rect x="13.8" y="24.6" width="1" height="1" fill="#27ae60"/><rect x="17.5" y="24.8" width="1" height="1" fill="#d35400"/><rect x="18.1" y="24.4" width="1" height="1" fill="#16a085"/><rect x="20.9" y="23.8" width="1" height="1" fill="#16a085"/><rect x="22.0" y="21.0" width="1" height="1" fill="#f39c12"/><rect x="16.3" y="13.3" width="1" height="1" fill="#e74c3c"/><rect x="12.6" y="16.7" width="1" height="1" fill="#c0392b"/><rect x="19.1" y="19.3" width="1" height="1" fill="#e74c3c"/><rect x="21.1" y="20.9" width="1" height="1" fill="#d35400"/><rect x="16.3" y="21.4" width="1" height="1" fill="#f39c12"/><rect x="19.7" y="23.9" width="1" height="1" fill="#c0392b"/><rect x="15.2" y="24.1" width="1" height="1" fill="#2e86c1"/><rect x="15.2" y="24.4" width="1" height="1" fill="#d35400"/><rect x="16.0" y="24.7" width="1" height="1" fill="#2e86c1"/></svg></div><div class="t" style="left:80.50px;top:417.80px;font-size:13px;line-height:13px;transform:scaleX(0.9904);transform-origin:0 0;">StarDist labels</div><svg style="left:39px;top:417px" width="14" height="12" viewBox="0 0 14 12" fill="none" stroke="#9ec3e6" stroke-width="1.1"><path d="M0.8,6 C3,1.9 10.5,1.9 12.7,6 C10.5,10.1 3,10.1 0.8,6Z"/><circle cx="6.75" cy="6" r="2" fill="#9ec3e6" stroke="none"/><path d="M2,10.3 L11.8,1.5"/></svg><svg style="left:193px;top:417px" width="12" height="12" viewBox="0 0 12 12" fill="none" stroke="#e0e1e3" stroke-width="1.2" stroke-linejoin="round"><path d="M1,7 L5.5,2.5 L10.5,1.5 L9.5,6.5 L5,11 Z"/><circle cx="7.8" cy="4.2" r="0.7" fill="#e0e1e3" stroke="none"/></svg><div class="a" style="left:33px;top:439px;width:181px;height:26px;background:#414851;border-radius:0 2px 2px 0"></div><div class="a" style="left:8px;top:439px;width:25px;height:26px;background:#050505;overflow:hidden"><svg style="left:0;top:0" width="25" height="26" viewBox="0 0 25 26"><rect x="3.4" y="0.0" width="1" height="1" fill="#4a4a4a"/><rect x="4.5" y="0.5" width="1" height="1" fill="#2a2a2a"/><rect x="5.9" y="0.7" width="1" height="1" fill="#2a2a2a"/><rect x="7.0" y="0.8" width="1" height="1" fill="#3a3a3a"/><rect x="8.1" y="0.5" width="1" height="1" fill="#4a4a4a"/><rect x="9.0" y="1.0" width="1" height="1" fill="#4a4a4a"/><rect x="1.9" y="1.2" width="1" height="1" fill="#3a3a3a"/><rect x="3.6" y="1.2" width="1" height="1" fill="#3a3a3a"/><rect x="3.5" y="2.3" width="1" height="1" fill="#2a2a2a"/><rect x="4.7" y="1.9" width="1" height="1" fill="#606060"/><rect x="8.0" y="2.2" width="1" height="1" fill="#2a2a2a"/><rect x="9.3" y="2.7" width="1" height="1" fill="#4a4a4a"/><rect x="10.7" y="3.1" width="1" height="1" fill="#3a3a3a"/><rect x="4.9" y="3.9" width="1" height="1" fill="#3a3a3a"/><rect x="7.6" y="3.7" width="1" height="1" fill="#606060"/><rect x="2.2" y="4.8" width="1" height="1" fill="#2a2a2a"/><rect x="1.3" y="5.3" width="1" height="1" fill="#4a4a4a"/><rect x="5.0" y="5.3" width="1" height="1" fill="#606060"/><rect x="6.2" y="5.0" width="1" height="1" fill="#2a2a2a"/><rect x="8.8" y="5.0" width="1" height="1" fill="#4a4a4a"/><rect x="3.2" y="5.9" width="1" height="1" fill="#4a4a4a"/><rect x="5.5" y="6.3" width="1" height="1" fill="#3a3a3a"/><rect x="7.9" y="7.3" width="1" height="1" fill="#3a3a3a"/><rect x="1.8" y="7.4" width="1" height="1" fill="#606060"/><rect x="3.7" y="7.1" width="1" height="1" fill="#2a2a2a"/><rect x="3.3" y="8.0" width="1" height="1" fill="#4a4a4a"/><rect x="9.9" y="9.4" width="1" height="1" fill="#4a4a4a"/><rect x="10.8" y="12.1" width="1" height="1" fill="#3a3a3a"/><rect x="5.8" y="2.2" width="1" height="1" fill="#2a2a2a"/><rect x="22.7" y="-0.1" width="1" height="1" fill="#606060"/><rect x="23.6" y="0.1" width="1" height="1" fill="#4a4a4a"/><rect x="21.6" y="2.1" width="1" height="1" fill="#606060"/><rect x="19.9" y="2.5" width="1" height="1" fill="#606060"/><rect x="21.1" y="3.4" width="1" height="1" fill="#2a2a2a"/><rect x="20.4" y="3.8" width="1" height="1" fill="#3a3a3a"/><rect x="23.0" y="4.6" width="1" height="1" fill="#3a3a3a"/><rect x="24.2" y="5.4" width="1" height="1" fill="#3a3a3a"/><rect x="20.5" y="6.0" width="1" height="1" fill="#606060"/><rect x="21.0" y="6.6" width="1" height="1" fill="#3a3a3a"/><rect x="22.4" y="6.4" width="1" height="1" fill="#4a4a4a"/><rect x="20.1" y="7.3" width="1" height="1" fill="#606060"/><rect x="23.3" y="8.6" width="1" height="1" fill="#4a4a4a"/><rect x="21.5" y="9.7" width="1" height="1" fill="#606060"/><rect x="20.7" y="10.6" width="1" height="1" fill="#4a4a4a"/><rect x="19.1" y="11.1" width="1" height="1" fill="#4a4a4a"/><rect x="23.8" y="12.0" width="1" height="1" fill="#2a2a2a"/><rect x="18.1" y="12.2" width="1" height="1" fill="#4a4a4a"/><rect x="12.4" y="10.7" width="1" height="1" fill="#606060"/><rect x="22.6" y="0.5" width="1" height="1" fill="#4a4a4a"/><rect x="23.3" y="3.2" width="1" height="1" fill="#2a2a2a"/><rect x="0.1" y="14.9" width="1" height="1" fill="#4a4a4a"/><rect x="4.0" y="15.7" width="1" height="1" fill="#606060"/><rect x="5.5" y="15.8" width="1" height="1" fill="#4a4a4a"/><rect x="4.3" y="16.9" width="1" height="1" fill="#606060"/><rect x="0.3" y="17.0" width="1" height="1" fill="#4a4a4a"/><rect x="1.2" y="17.7" width="1" height="1" fill="#2a2a2a"/><rect x="5.9" y="17.8" width="1" height="1" fill="#606060"/><rect x="10.0" y="15.5" width="1" height="1" fill="#3a3a3a"/><rect x="10.2" y="16.2" width="1" height="1" fill="#606060"/><rect x="8.7" y="16.3" width="1" height="1" fill="#2a2a2a"/><rect x="9.9" y="16.9" width="1" height="1" fill="#3a3a3a"/><rect x="10.6" y="16.6" width="1" height="1" fill="#4a4a4a"/><rect x="9.4" y="17.2" width="1" height="1" fill="#2a2a2a"/><rect x="10.5" y="18.2" width="1" height="1" fill="#606060"/><rect x="11.3" y="18.8" width="1" height="1" fill="#2a2a2a"/><rect x="9.4" y="19.2" width="1" height="1" fill="#4a4a4a"/><rect x="7.8" y="18.8" width="1" height="1" fill="#2a2a2a"/><rect x="6.2" y="19.0" width="1" height="1" fill="#4a4a4a"/><rect x="6.9" y="19.4" width="1" height="1" fill="#2a2a2a"/><rect x="8.5" y="19.6" width="1" height="1" fill="#2a2a2a"/><rect x="9.1" y="20.0" width="1" height="1" fill="#3a3a3a"/><rect x="1.4" y="19.3" width="1" height="1" fill="#3a3a3a"/><rect x="2.6" y="20.0" width="1" height="1" fill="#606060"/><rect x="3.1" y="20.7" width="1" height="1" fill="#2a2a2a"/><rect x="10.8" y="19.9" width="1" height="1" fill="#2a2a2a"/><rect x="11.5" y="20.9" width="1" height="1" fill="#2a2a2a"/><rect x="6.4" y="20.7" width="1" height="1" fill="#2a2a2a"/><rect x="-0.2" y="21.3" width="1" height="1" fill="#4a4a4a"/><rect x="1.1" y="21.0" width="1" height="1" fill="#606060"/><rect x="3.2" y="21.6" width="1" height="1" fill="#4a4a4a"/><rect x="4.7" y="21.6" width="1" height="1" fill="#3a3a3a"/><rect x="6.5" y="22.0" width="1" height="1" fill="#606060"/><rect x="0.6" y="22.1" width="1" height="1" fill="#606060"/><rect x="0.5" y="22.6" width="1" height="1" fill="#606060"/><rect x="2.8" y="22.6" width="1" height="1" fill="#4a4a4a"/><rect x="3.1" y="23.8" width="1" height="1" fill="#2a2a2a"/><rect x="6.0" y="24.6" width="1" height="1" fill="#2a2a2a"/><rect x="1.3" y="24.8" width="1" height="1" fill="#4a4a4a"/><rect x="11.3" y="24.0" width="1" height="1" fill="#606060"/><rect x="11.8" y="25.2" width="1" height="1" fill="#3a3a3a"/><rect x="8.3" y="15.2" width="1" height="1" fill="#3a3a3a"/><rect x="8.6" y="15.9" width="1" height="1" fill="#2a2a2a"/><rect x="11.5" y="15.2" width="1" height="1" fill="#4a4a4a"/><rect x="2.5" y="18.8" width="1" height="1" fill="#4a4a4a"/><rect x="1.2" y="23.0" width="1" height="1" fill="#606060"/><rect x="14.3" y="13.2" width="1" height="1" fill="#4a4a4a"/><rect x="13.4" y="14.1" width="1" height="1" fill="#4a4a4a"/><rect x="14.4" y="14.0" width="1" height="1" fill="#3a3a3a"/><rect x="12.9" y="15.2" width="1" height="1" fill="#606060"/><rect x="15.6" y="14.5" width="1" height="1" fill="#606060"/><rect x="12.2" y="15.9" width="1" height="1" fill="#606060"/><rect x="16.6" y="16.5" width="1" height="1" fill="#4a4a4a"/><rect x="17.1" y="16.9" width="1" height="1" fill="#4a4a4a"/><rect x="13.5" y="17.3" width="1" height="1" fill="#606060"/><rect x="14.6" y="17.5" width="1" height="1" fill="#4a4a4a"/><rect x="12.5" y="18.1" width="1" height="1" fill="#2a2a2a"/><rect x="16.9" y="18.0" width="1" height="1" fill="#4a4a4a"/><rect x="17.9" y="17.4" width="1" height="1" fill="#606060"/><rect x="18.8" y="14.1" width="1" height="1" fill="#3a3a3a"/><rect x="19.9" y="15.5" width="1" height="1" fill="#3a3a3a"/><rect x="21.8" y="15.5" width="1" height="1" fill="#606060"/><rect x="21.2" y="16.2" width="1" height="1" fill="#606060"/><rect x="22.6" y="15.2" width="1" height="1" fill="#4a4a4a"/><rect x="23.3" y="16.7" width="1" height="1" fill="#3a3a3a"/><rect x="23.7" y="15.0" width="1" height="1" fill="#2a2a2a"/><rect x="24.2" y="13.8" width="1" height="1" fill="#2a2a2a"/><rect x="23.1" y="14.0" width="1" height="1" fill="#2a2a2a"/><rect x="18.6" y="13.0" width="1" height="1" fill="#2a2a2a"/><rect x="20.2" y="17.3" width="1" height="1" fill="#2a2a2a"/><rect x="22.8" y="17.6" width="1" height="1" fill="#4a4a4a"/><rect x="23.4" y="17.7" width="1" height="1" fill="#606060"/><rect x="24.2" y="19.1" width="1" height="1" fill="#606060"/><rect x="22.5" y="19.4" width="1" height="1" fill="#4a4a4a"/><rect x="22.9" y="20.6" width="1" height="1" fill="#2a2a2a"/><rect x="22.1" y="20.5" width="1" height="1" fill="#606060"/><rect x="21.0" y="18.7" width="1" height="1" fill="#3a3a3a"/><rect x="19.7" y="18.7" width="1" height="1" fill="#3a3a3a"/><rect x="15.6" y="19.3" width="1" height="1" fill="#2a2a2a"/><rect x="12.7" y="19.5" width="1" height="1" fill="#3a3a3a"/><rect x="15.5" y="20.6" width="1" height="1" fill="#606060"/><rect x="16.5" y="21.0" width="1" height="1" fill="#2a2a2a"/><rect x="17.4" y="20.2" width="1" height="1" fill="#2a2a2a"/><rect x="19.1" y="20.6" width="1" height="1" fill="#2a2a2a"/><rect x="21.2" y="19.8" width="1" height="1" fill="#4a4a4a"/><rect x="24.3" y="22.7" width="1" height="1" fill="#606060"/><rect x="16.8" y="22.3" width="1" height="1" fill="#3a3a3a"/><rect x="12.5" y="22.5" width="1" height="1" fill="#4a4a4a"/><rect x="15.6" y="22.9" width="1" height="1" fill="#4a4a4a"/><rect x="18.3" y="23.0" width="1" height="1" fill="#3a3a3a"/><rect x="19.3" y="22.8" width="1" height="1" fill="#2a2a2a"/><rect x="19.9" y="23.3" width="1" height="1" fill="#2a2a2a"/><rect x="22.8" y="23.1" width="1" height="1" fill="#606060"/><rect x="17.0" y="23.7" width="1" height="1" fill="#2a2a2a"/><rect x="16.7" y="24.2" width="1" height="1" fill="#606060"/><rect x="13.8" y="24.6" width="1" height="1" fill="#606060"/><rect x="17.5" y="24.8" width="1" height="1" fill="#606060"/><rect x="18.1" y="24.4" width="1" height="1" fill="#3a3a3a"/><rect x="18.7" y="24.0" width="1" height="1" fill="#3a3a3a"/><rect x="22.3" y="24.2" width="1" height="1" fill="#3a3a3a"/><rect x="22.0" y="21.0" width="1" height="1" fill="#2a2a2a"/><rect x="12.4" y="14.4" width="1" height="1" fill="#606060"/><rect x="18.1" y="13.1" width="1" height="1" fill="#4a4a4a"/><rect x="12.6" y="16.7" width="1" height="1" fill="#4a4a4a"/><rect x="19.3" y="18.0" width="1" height="1" fill="#4a4a4a"/><rect x="20.7" y="18.0" width="1" height="1" fill="#3a3a3a"/><rect x="21.0" y="20.1" width="1" height="1" fill="#3a3a3a"/><rect x="23.8" y="20.3" width="1" height="1" fill="#2a2a2a"/><rect x="21.1" y="20.9" width="1" height="1" fill="#2a2a2a"/><rect x="16.2" y="20.8" width="1" height="1" fill="#3a3a3a"/><rect x="16.3" y="21.4" width="1" height="1" fill="#4a4a4a"/><rect x="19.7" y="23.9" width="1" height="1" fill="#606060"/><rect x="15.2" y="24.1" width="1" height="1" fill="#606060"/><rect x="15.2" y="24.4" width="1" height="1" fill="#3a3a3a"/><rect x="16.0" y="24.7" width="1" height="1" fill="#3a3a3a"/><rect x="22.0" y="12.6" width="1" height="1" fill="#3a3a3a"/><rect x="22.2" y="13.0" width="1" height="1" fill="#4a4a4a"/></svg></div><div class="t" style="left:77.00px;top:446.80px;font-size:13px;line-height:13px;transform:scaleX(1.0295);transform-origin:0 0;">human_mitosis</div><svg style="left:39px;top:446px" width="14" height="12" viewBox="0 0 14 12" fill="none" stroke="#d1d2d4" stroke-width="1.2"><path d="M0.8,6 C3,1.8 10.5,1.8 12.7,6 C10.5,10.2 3,10.2 0.8,6Z"/><circle cx="6.75" cy="6" r="2.1" fill="#d1d2d4" stroke="none"/></svg><svg style="left:193px;top:446px" width="13" height="11" viewBox="0 0 13 11"><rect x="0.6" y="0.6" width="11.8" height="9.8" fill="none" stroke="#e0e1e3" stroke-width="1.2"/><path d="M1,10 L4.5,5 L7,8 L9,6 L12,10Z" fill="#e0e1e3"/><circle cx="9" cy="3.3" r="1.1" fill="#e0e1e3"/></svg><div class="a" style="left:9px;top:560px;width:24px;height:24px;background:#414851;border-radius:2px"></div><div class="a" style="left:38px;top:560px;width:24px;height:24px;background:#414851;border-radius:2px"></div><div class="a" style="left:67px;top:560px;width:24px;height:24px;background:#414851;border-radius:2px"></div><div class="a" style="left:96px;top:560px;width:24px;height:24px;background:#414851;border-radius:2px"></div><div class="a" style="left:125px;top:560px;width:24px;height:24px;background:#414851;border-radius:2px"></div><div class="a" style="left:154px;top:560px;width:24px;height:24px;background:#414851;border-radius:2px"></div>
<svg style="left:9px;top:560px" width="24" height="24" viewBox="0 0 24 24" fill="none" stroke="#d1d2d4" stroke-width="2.3" stroke-linecap="round" stroke-linejoin="round"><path d="M3.4,4.8 L11,10.8 L3.4,16.8"/><path d="M10.4,17.8 H20.4"/></svg>
<svg style="left:38px;top:560px" width="24" height="24" viewBox="0 0 24 24" fill="none" stroke="#d1d2d4" stroke-width="3.2"><rect x="4.7" y="4.4" width="13.8" height="14.3" rx="2.2"/></svg>
<svg style="left:67px;top:560px" width="24" height="24" viewBox="0 0 24 24"><path d="M6,9.8 L13.5,6.6 L21,9.8 L21,18.5 L13.5,22.5 L6.3,18.7Z" fill="#d1d2d4"/><path d="M7.6,10.3 L13.5,12.8 L19.6,10.3 L13.5,7.9Z" fill="#414851"/><path d="M14.5,14.2 L19.6,11.8 L19.6,18 L14.5,20.7Z" fill="#414851"/><path d="M2,9.5 C1.5,6 4,3.8 7,4.2" stroke="#d1d2d4" stroke-width="1.8" fill="none" stroke-linecap="round"/><path d="M6,1.8 L9.3,4 L6.2,6.3Z" fill="#d1d2d4"/></svg>
<svg style="left:96px;top:560px" width="24" height="24" viewBox="0 0 24 24"><rect x="3" y="10" width="10" height="10.2" rx="1.8" fill="none" stroke="#d1d2d4" stroke-width="2.3"/><path d="M19.8,10.3 C19.5,7.5 17.5,5.5 14.8,5.2" stroke="#d1d2d4" stroke-width="2" fill="none" stroke-linecap="round"/><path d="M12.3,5 L16.5,1.6 L16.8,7.8Z" fill="#d1d2d4"/></svg>
<svg style="left:125px;top:560px" width="24" height="24" viewBox="0 0 24 24" fill="#d1d2d4"><rect x="2.9" y="2.3" width="4.2" height="4.3" rx="0.4"/><rect x="9.8" y="2.3" width="4.2" height="4.3" rx="0.4"/><rect x="16.7" y="2.3" width="4.2" height="4.3" rx="0.4"/><rect x="2.9" y="9.4" width="4.2" height="4.2" rx="0.4"/><rect x="9.8" y="9.4" width="4.2" height="4.2" rx="0.4"/><rect x="16.7" y="9.4" width="4.2" height="4.2" rx="0.4"/><rect x="2.9" y="16.4" width="4.2" height="4.2" rx="0.4"/><rect x="9.8" y="16.4" width="4.2" height="4.2" rx="0.4"/><rect x="16.7" y="16.4" width="4.2" height="4.2" rx="0.4"/></svg>
<svg style="left:154px;top:560px" width="24" height="24" viewBox="0 0 24 24" fill="#d1d2d4"><path d="M2.4,11.9 L11.5,2.5 L20.9,11.9 L19,11.9 L19,20.6 L14.2,20.6 L14.2,14.5 L10,14.5 L10,20.6 L5.3,20.6 L5.3,11.9Z" stroke="#d1d2d4" stroke-width="0.6" stroke-linejoin="round"/><rect x="14.8" y="3.7" width="3.8" height="6"/></svg>

<div class="a" style="left:236px;top:66px;width:272px;height:513px;background:#000"></div>
<div class="a" style="left:266px;top:228px;width:208px;height:208px;background:#0b0b0b;overflow:hidden">
<svg style="left:0;top:0" width="208" height="208" viewBox="0 0 208 208"><ellipse cx="11.9" cy="1.7" rx="2.3" ry="2.2" fill="#d9792a"/><ellipse cx="18.7" cy="2.0" rx="2.6" ry="2.1" fill="#d9792a"/><ellipse cx="23.4" cy="6.5" rx="2.5" ry="2.4" fill="#d9792a"/><ellipse cx="32.3" cy="4.2" rx="2.5" ry="2.4" fill="#d9792a"/><ellipse cx="41.3" cy="7.6" rx="2.4" ry="2.2" fill="#d9792a"/><ellipse cx="53.0" cy="9.3" rx="2.3" ry="2.2" fill="#d9792a"/><ellipse cx="62.0" cy="10.5" rx="2.5" ry="2.0" fill="#d9792a"/><ellipse cx="71.7" cy="7.6" rx="2.2" ry="2.4" fill="#d9792a"/><ellipse cx="79.0" cy="11.9" rx="2.2" ry="2.0" fill="#d9792a"/><ellipse cx="12.7" cy="11.6" rx="2.1" ry="2.3" fill="#d9792a"/><ellipse cx="20.1" cy="13.9" rx="2.3" ry="2.5" fill="#d9792a"/><ellipse cx="26.0" cy="14.4" rx="2.5" ry="2.5" fill="#d9792a"/><ellipse cx="34.5" cy="13.3" rx="2.2" ry="2.0" fill="#d9792a"/><ellipse cx="18.4" cy="19.0" rx="2.1" ry="2.2" fill="#d9792a"/><ellipse cx="33.1" cy="22.6" rx="2.5" ry="2.2" fill="#d9792a"/><ellipse cx="43.3" cy="19.5" rx="2.2" ry="2.2" fill="#d9792a"/><ellipse cx="50.1" cy="25.1" rx="2.4" ry="2.3" fill="#d9792a"/><ellipse cx="60.3" cy="20.7" rx="2.5" ry="2.4" fill="#d9792a"/><ellipse cx="70.5" cy="21.8" rx="2.4" ry="2.1" fill="#d9792a"/><ellipse cx="81.2" cy="18.4" rx="2.5" ry="2.1" fill="#d9792a"/><ellipse cx="81.2" cy="25.8" rx="2.4" ry="2.2" fill="#d9792a"/><ellipse cx="93.5" cy="28.5" rx="2.5" ry="2.1" fill="#d9792a"/><ellipse cx="21.2" cy="28.9" rx="2.2" ry="2.1" fill="#d9792a"/><ellipse cx="30.1" cy="34.3" rx="2.2" ry="2.4" fill="#d9792a"/><ellipse cx="44.5" cy="34.8" rx="2.4" ry="2.2" fill="#d9792a"/><ellipse cx="42.8" cy="39.1" rx="2.3" ry="2.5" fill="#d9792a"/><ellipse cx="67.6" cy="33.5" rx="2.4" ry="2.1" fill="#d9792a"/><ellipse cx="22.1" cy="42.1" rx="2.5" ry="2.3" fill="#d9792a"/><ellipse cx="15.0" cy="46.2" rx="2.6" ry="2.1" fill="#d9792a"/><ellipse cx="30.6" cy="45.0" rx="2.3" ry="2.4" fill="#d9792a"/><ellipse cx="39.4" cy="44.5" rx="2.5" ry="2.5" fill="#d9792a"/><ellipse cx="45.9" cy="46.4" rx="2.1" ry="2.1" fill="#d9792a"/><ellipse cx="55.7" cy="43.8" rx="2.2" ry="2.1" fill="#d9792a"/><ellipse cx="67.1" cy="47.6" rx="2.6" ry="2.3" fill="#d9792a"/><ellipse cx="77.3" cy="44.2" rx="2.6" ry="2.2" fill="#d9792a"/><ellipse cx="3.7" cy="50.1" rx="2.5" ry="2.2" fill="#d9792a"/><ellipse cx="31.1" cy="51.5" rx="2.2" ry="2.4" fill="#d9792a"/><ellipse cx="49.6" cy="54.4" rx="2.6" ry="2.1" fill="#d9792a"/><ellipse cx="69.7" cy="57.8" rx="2.4" ry="2.3" fill="#d9792a"/><ellipse cx="69.7" cy="62.0" rx="2.2" ry="2.2" fill="#d9792a"/><ellipse cx="19.0" cy="62.9" rx="2.2" ry="2.1" fill="#d9792a"/><ellipse cx="34.8" cy="61.2" rx="2.2" ry="2.3" fill="#d9792a"/><ellipse cx="44.2" cy="60.3" rx="2.4" ry="2.1" fill="#d9792a"/><ellipse cx="31.4" cy="68.0" rx="2.1" ry="2.2" fill="#d9792a"/><ellipse cx="86.7" cy="79.0" rx="2.4" ry="2.1" fill="#d9792a"/><ellipse cx="102.0" cy="87.0" rx="2.3" ry="2.1" fill="#d9792a"/><ellipse cx="94.3" cy="101.1" rx="2.5" ry="2.3" fill="#d9792a"/><ellipse cx="52.3" cy="21.2" rx="2.0" ry="1.6" fill="#3b8ccc"/><ellipse cx="51.5" cy="35.3" rx="2.2" ry="1.8" fill="#3b8ccc"/><ellipse cx="85.8" cy="46.4" rx="2.3" ry="1.6" fill="#3b8ccc"/><ellipse cx="177.4" cy="4.8" rx="2.2" ry="2.3" fill="#d9792a"/><ellipse cx="182.5" cy="2.0" rx="2.3" ry="2.1" fill="#d9792a"/><ellipse cx="193.2" cy="3.1" rx="2.3" ry="2.5" fill="#d9792a"/><ellipse cx="200.9" cy="4.8" rx="2.3" ry="2.3" fill="#d9792a"/><ellipse cx="198.3" cy="11.6" rx="2.3" ry="2.2" fill="#d9792a"/><ellipse cx="180.5" cy="16.1" rx="2.5" ry="2.5" fill="#d9792a"/><ellipse cx="184.2" cy="20.7" rx="2.3" ry="2.1" fill="#d9792a"/><ellipse cx="200.9" cy="21.2" rx="2.5" ry="2.1" fill="#d9792a"/><ellipse cx="169.4" cy="23.8" rx="2.1" ry="2.5" fill="#d9792a"/><ellipse cx="159.7" cy="28.9" rx="2.3" ry="2.4" fill="#d9792a"/><ellipse cx="179.6" cy="30.9" rx="2.3" ry="2.4" fill="#d9792a"/><ellipse cx="173.7" cy="34.3" rx="2.3" ry="2.1" fill="#d9792a"/><ellipse cx="202.6" cy="29.7" rx="2.1" ry="2.3" fill="#d9792a"/><ellipse cx="195.4" cy="40.8" rx="2.4" ry="2.5" fill="#d9792a"/><ellipse cx="202.2" cy="39.4" rx="2.1" ry="2.3" fill="#d9792a"/><ellipse cx="205.1" cy="47.2" rx="2.3" ry="2.3" fill="#d9792a"/><ellipse cx="116.2" cy="46.2" rx="2.2" ry="2.1" fill="#d9792a"/><ellipse cx="115.0" cy="50.1" rx="2.4" ry="2.5" fill="#d9792a"/><ellipse cx="174.5" cy="51.8" rx="2.2" ry="2.2" fill="#d9792a"/><ellipse cx="178.8" cy="56.9" rx="2.5" ry="2.5" fill="#d9792a"/><ellipse cx="190.3" cy="55.2" rx="2.2" ry="2.1" fill="#d9792a"/><ellipse cx="171.1" cy="62.0" rx="2.6" ry="2.5" fill="#d9792a"/><ellipse cx="193.7" cy="64.2" rx="2.3" ry="2.0" fill="#d9792a"/><ellipse cx="183.9" cy="70.5" rx="2.6" ry="2.2" fill="#d9792a"/><ellipse cx="176.7" cy="73.1" rx="2.6" ry="2.3" fill="#d9792a"/><ellipse cx="198.0" cy="72.7" rx="2.5" ry="2.1" fill="#d9792a"/><ellipse cx="156.7" cy="81.2" rx="2.5" ry="2.1" fill="#d9792a"/><ellipse cx="183.0" cy="81.6" rx="2.3" ry="2.4" fill="#d9792a"/><ellipse cx="196.6" cy="85.0" rx="2.5" ry="2.1" fill="#d9792a"/><ellipse cx="176.2" cy="88.7" rx="2.2" ry="2.2" fill="#d9792a"/><ellipse cx="163.1" cy="92.6" rx="2.4" ry="2.2" fill="#d9792a"/><ellipse cx="189.3" cy="93.1" rx="2.2" ry="2.1" fill="#d9792a"/><ellipse cx="181.3" cy="98.2" rx="2.5" ry="2.4" fill="#d9792a"/><ellipse cx="202.2" cy="99.9" rx="2.1" ry="2.3" fill="#d9792a"/><ellipse cx="154.6" cy="102.0" rx="2.5" ry="2.0" fill="#d9792a"/><ellipse cx="107.4" cy="89.2" rx="2.5" ry="2.1" fill="#d9792a"/><ellipse cx="107.1" cy="96.9" rx="2.4" ry="2.3" fill="#d9792a"/><ellipse cx="115.9" cy="102.3" rx="2.4" ry="2.2" fill="#d9792a"/><ellipse cx="124.4" cy="102.8" rx="2.3" ry="2.3" fill="#d9792a"/><ellipse cx="192.4" cy="7.6" rx="2.2" ry="1.9" fill="#3b8ccc"/><ellipse cx="184.7" cy="15.0" rx="2.2" ry="1.8" fill="#3b8ccc"/><ellipse cx="198.0" cy="29.7" rx="2.0" ry="1.8" fill="#3b8ccc"/><ellipse cx="172.8" cy="82.4" rx="2.2" ry="1.7" fill="#3b8ccc"/><ellipse cx="187.3" cy="102.5" rx="2.3" ry="1.9" fill="#3b8ccc"/><ellipse cx="1.7" cy="118.4" rx="2.3" ry="2.1" fill="#d9792a"/><ellipse cx="5.1" cy="123.5" rx="2.3" ry="2.1" fill="#d9792a"/><ellipse cx="43.3" cy="121.0" rx="2.2" ry="2.2" fill="#d9792a"/><ellipse cx="54.4" cy="119.0" rx="2.1" ry="2.2" fill="#d9792a"/><ellipse cx="30.2" cy="127.4" rx="2.4" ry="2.0" fill="#d9792a"/><ellipse cx="37.7" cy="129.5" rx="2.4" ry="2.0" fill="#d9792a"/><ellipse cx="50.1" cy="130.3" rx="2.5" ry="2.4" fill="#d9792a"/><ellipse cx="50.1" cy="136.3" rx="2.4" ry="2.0" fill="#d9792a"/><ellipse cx="39.9" cy="139.3" rx="2.4" ry="2.2" fill="#d9792a"/><ellipse cx="6.5" cy="140.0" rx="2.6" ry="2.1" fill="#d9792a"/><ellipse cx="14.4" cy="145.6" rx="2.5" ry="2.5" fill="#d9792a"/><ellipse cx="5.9" cy="147.3" rx="2.5" ry="2.4" fill="#d9792a"/><ellipse cx="53.5" cy="146.5" rx="2.2" ry="2.5" fill="#d9792a"/><ellipse cx="84.6" cy="118.4" rx="2.3" ry="2.5" fill="#d9792a"/><ellipse cx="90.9" cy="115.9" rx="2.6" ry="2.1" fill="#d9792a"/><ellipse cx="90.4" cy="106.0" rx="2.5" ry="2.5" fill="#d9792a"/><ellipse cx="87.5" cy="127.8" rx="2.1" ry="2.2" fill="#d9792a"/><ellipse cx="89.2" cy="133.7" rx="2.5" ry="2.1" fill="#d9792a"/><ellipse cx="76.5" cy="134.6" rx="2.5" ry="2.1" fill="#d9792a"/><ellipse cx="86.7" cy="138.8" rx="2.5" ry="2.1" fill="#d9792a"/><ellipse cx="92.6" cy="137.1" rx="2.4" ry="2.5" fill="#d9792a"/><ellipse cx="82.4" cy="141.4" rx="2.2" ry="2.1" fill="#d9792a"/><ellipse cx="71.0" cy="144.8" rx="2.4" ry="2.2" fill="#d9792a"/><ellipse cx="75.6" cy="147.3" rx="2.1" ry="2.1" fill="#d9792a"/><ellipse cx="101.1" cy="143.9" rx="2.2" ry="2.5" fill="#d9792a"/><ellipse cx="96.9" cy="147.8" rx="2.4" ry="2.4" fill="#d9792a"/><ellipse cx="91.8" cy="149.9" rx="2.2" ry="2.4" fill="#d9792a"/><ellipse cx="98.2" cy="154.1" rx="2.2" ry="2.3" fill="#d9792a"/><ellipse cx="92.6" cy="155.8" rx="2.4" ry="2.2" fill="#d9792a"/><ellipse cx="85.8" cy="156.7" rx="2.5" ry="2.3" fill="#d9792a"/><ellipse cx="79.5" cy="153.3" rx="2.4" ry="2.4" fill="#d9792a"/><ellipse cx="82.4" cy="157.5" rx="2.2" ry="2.5" fill="#d9792a"/><ellipse cx="68.8" cy="154.1" rx="2.4" ry="2.2" fill="#d9792a"/><ellipse cx="55.7" cy="155.8" rx="2.5" ry="2.1" fill="#d9792a"/><ellipse cx="61.5" cy="159.2" rx="2.6" ry="2.3" fill="#d9792a"/><ellipse cx="74.8" cy="160.9" rx="2.3" ry="2.4" fill="#d9792a"/><ellipse cx="79.9" cy="163.8" rx="2.3" ry="2.1" fill="#d9792a"/><ellipse cx="8.5" cy="158.7" rx="2.5" ry="2.0" fill="#d9792a"/><ellipse cx="16.1" cy="158.7" rx="2.5" ry="2.1" fill="#d9792a"/><ellipse cx="1.7" cy="163.5" rx="2.4" ry="2.5" fill="#d9792a"/><ellipse cx="25.5" cy="164.3" rx="2.4" ry="2.3" fill="#d9792a"/><ellipse cx="29.7" cy="169.9" rx="2.3" ry="2.0" fill="#d9792a"/><ellipse cx="94.3" cy="163.5" rx="2.1" ry="2.1" fill="#d9792a"/><ellipse cx="96.9" cy="167.2" rx="2.4" ry="2.2" fill="#d9792a"/><ellipse cx="89.2" cy="168.9" rx="2.4" ry="2.4" fill="#d9792a"/><ellipse cx="100.3" cy="171.1" rx="2.2" ry="2.1" fill="#d9792a"/><ellipse cx="57.8" cy="169.9" rx="2.4" ry="2.0" fill="#d9792a"/><ellipse cx="2.5" cy="174.0" rx="2.1" ry="2.2" fill="#d9792a"/><ellipse cx="13.6" cy="172.0" rx="2.2" ry="2.2" fill="#d9792a"/><ellipse cx="22.1" cy="173.3" rx="2.2" ry="2.3" fill="#d9792a"/><ellipse cx="30.6" cy="177.1" rx="2.4" ry="2.1" fill="#d9792a"/><ellipse cx="43.3" cy="177.1" rx="2.4" ry="2.2" fill="#d9792a"/><ellipse cx="58.6" cy="179.6" rx="2.2" ry="2.5" fill="#d9792a"/><ellipse cx="19.5" cy="179.6" rx="2.2" ry="2.1" fill="#d9792a"/><ellipse cx="9.3" cy="180.5" rx="2.1" ry="2.3" fill="#d9792a"/><ellipse cx="8.5" cy="184.7" rx="2.5" ry="2.4" fill="#d9792a"/><ellipse cx="20.4" cy="186.4" rx="2.3" ry="2.1" fill="#d9792a"/><ellipse cx="27.2" cy="184.7" rx="2.1" ry="2.3" fill="#d9792a"/><ellipse cx="56.1" cy="190.7" rx="2.4" ry="2.2" fill="#d9792a"/><ellipse cx="30.2" cy="194.1" rx="2.4" ry="2.2" fill="#d9792a"/><ellipse cx="4.2" cy="194.4" rx="2.6" ry="2.4" fill="#d9792a"/><ellipse cx="26.3" cy="200.0" rx="2.2" ry="2.5" fill="#d9792a"/><ellipse cx="54.4" cy="200.5" rx="2.1" ry="2.3" fill="#d9792a"/><ellipse cx="15.3" cy="202.6" rx="2.3" ry="2.1" fill="#d9792a"/><ellipse cx="34.8" cy="206.0" rx="2.1" ry="2.4" fill="#d9792a"/><ellipse cx="98.6" cy="195.8" rx="2.1" ry="2.3" fill="#d9792a"/><ellipse cx="102.0" cy="206.0" rx="2.6" ry="2.1" fill="#d9792a"/><ellipse cx="46.7" cy="127.4" rx="2.1" ry="1.8" fill="#3b8ccc"/><ellipse cx="73.4" cy="125.8" rx="2.2" ry="1.9" fill="#3b8ccc"/><ellipse cx="75.6" cy="130.8" rx="2.3" ry="1.7" fill="#3b8ccc"/><ellipse cx="100.3" cy="125.2" rx="2.1" ry="1.7" fill="#3b8ccc"/><ellipse cx="25.1" cy="154.1" rx="2.0" ry="2.0" fill="#3b8ccc"/><ellipse cx="30.2" cy="173.3" rx="2.3" ry="1.9" fill="#3b8ccc"/><ellipse cx="14.4" cy="188.1" rx="2.0" ry="1.9" fill="#3b8ccc"/><ellipse cx="9.9" cy="190.3" rx="2.3" ry="1.8" fill="#3b8ccc"/><ellipse cx="45.9" cy="197.1" rx="2.3" ry="1.8" fill="#3b8ccc"/><ellipse cx="106.0" cy="110.8" rx="2.2" ry="2.1" fill="#d9792a"/><ellipse cx="124.4" cy="104.8" rx="2.2" ry="2.0" fill="#d9792a"/><ellipse cx="123.5" cy="109.9" rx="2.3" ry="2.4" fill="#d9792a"/><ellipse cx="115.6" cy="116.7" rx="2.4" ry="2.4" fill="#d9792a"/><ellipse cx="124.1" cy="116.2" rx="2.5" ry="2.1" fill="#d9792a"/><ellipse cx="106.5" cy="120.1" rx="2.4" ry="2.2" fill="#d9792a"/><ellipse cx="111.6" cy="125.2" rx="2.5" ry="2.3" fill="#d9792a"/><ellipse cx="126.1" cy="121.8" rx="2.2" ry="2.3" fill="#d9792a"/><ellipse cx="134.2" cy="120.1" rx="2.6" ry="2.1" fill="#d9792a"/><ellipse cx="130.3" cy="127.8" rx="2.5" ry="2.0" fill="#d9792a"/><ellipse cx="106.0" cy="130.8" rx="2.2" ry="2.1" fill="#d9792a"/><ellipse cx="119.6" cy="134.6" rx="2.5" ry="2.5" fill="#d9792a"/><ellipse cx="126.9" cy="133.7" rx="2.5" ry="2.2" fill="#d9792a"/><ellipse cx="135.4" cy="139.7" rx="2.5" ry="2.2" fill="#d9792a"/><ellipse cx="142.2" cy="135.9" rx="2.2" ry="2.5" fill="#d9792a"/><ellipse cx="146.5" cy="138.8" rx="2.4" ry="2.3" fill="#d9792a"/><ellipse cx="116.7" cy="142.2" rx="2.4" ry="2.5" fill="#d9792a"/><ellipse cx="125.2" cy="143.9" rx="2.3" ry="2.4" fill="#d9792a"/><ellipse cx="108.2" cy="148.5" rx="2.4" ry="2.4" fill="#d9792a"/><ellipse cx="119.0" cy="148.5" rx="2.3" ry="2.4" fill="#d9792a"/><ellipse cx="136.6" cy="147.3" rx="2.4" ry="2.2" fill="#d9792a"/><ellipse cx="144.4" cy="147.8" rx="2.2" ry="2.3" fill="#d9792a"/><ellipse cx="153.3" cy="143.4" rx="2.1" ry="2.5" fill="#d9792a"/><ellipse cx="155.8" cy="135.4" rx="2.2" ry="2.0" fill="#d9792a"/><ellipse cx="158.4" cy="128.6" rx="2.2" ry="2.5" fill="#d9792a"/><ellipse cx="148.5" cy="125.8" rx="2.3" ry="2.1" fill="#d9792a"/><ellipse cx="155.8" cy="120.1" rx="2.1" ry="2.0" fill="#d9792a"/><ellipse cx="160.9" cy="116.7" rx="2.4" ry="2.3" fill="#d9792a"/><ellipse cx="167.7" cy="117.6" rx="2.4" ry="2.4" fill="#d9792a"/><ellipse cx="172.8" cy="120.1" rx="2.1" ry="2.3" fill="#d9792a"/><ellipse cx="169.4" cy="127.8" rx="2.3" ry="2.4" fill="#d9792a"/><ellipse cx="174.0" cy="129.5" rx="2.5" ry="2.4" fill="#d9792a"/><ellipse cx="177.4" cy="130.3" rx="2.1" ry="2.4" fill="#d9792a"/><ellipse cx="181.3" cy="125.2" rx="2.6" ry="2.5" fill="#d9792a"/><ellipse cx="185.2" cy="127.8" rx="2.2" ry="2.1" fill="#d9792a"/><ellipse cx="180.5" cy="133.7" rx="2.2" ry="2.0" fill="#d9792a"/><ellipse cx="192.4" cy="125.2" rx="2.5" ry="2.4" fill="#d9792a"/><ellipse cx="192.7" cy="131.2" rx="2.4" ry="2.4" fill="#d9792a"/><ellipse cx="198.3" cy="138.0" rx="2.4" ry="2.1" fill="#d9792a"/><ellipse cx="201.2" cy="124.4" rx="2.1" ry="2.0" fill="#d9792a"/><ellipse cx="204.3" cy="129.5" rx="2.5" ry="2.1" fill="#d9792a"/><ellipse cx="205.1" cy="114.2" rx="2.3" ry="2.2" fill="#d9792a"/><ellipse cx="196.6" cy="116.2" rx="2.1" ry="2.1" fill="#d9792a"/><ellipse cx="189.8" cy="119.3" rx="2.2" ry="2.4" fill="#d9792a"/><ellipse cx="191.5" cy="111.6" rx="2.3" ry="2.2" fill="#d9792a"/><ellipse cx="193.2" cy="107.4" rx="2.6" ry="2.3" fill="#d9792a"/><ellipse cx="179.6" cy="113.3" rx="2.5" ry="2.3" fill="#d9792a"/><ellipse cx="159.2" cy="108.2" rx="2.1" ry="2.2" fill="#d9792a"/><ellipse cx="164.3" cy="139.7" rx="2.3" ry="2.4" fill="#d9792a"/><ellipse cx="172.0" cy="142.2" rx="2.3" ry="2.4" fill="#d9792a"/><ellipse cx="177.9" cy="141.0" rx="2.4" ry="2.1" fill="#d9792a"/><ellipse cx="185.2" cy="141.7" rx="2.5" ry="2.0" fill="#d9792a"/><ellipse cx="194.1" cy="144.8" rx="2.5" ry="2.1" fill="#d9792a"/><ellipse cx="199.2" cy="145.6" rx="2.1" ry="2.1" fill="#d9792a"/><ellipse cx="196.6" cy="152.4" rx="2.5" ry="2.5" fill="#d9792a"/><ellipse cx="205.1" cy="156.7" rx="2.1" ry="2.2" fill="#d9792a"/><ellipse cx="191.5" cy="159.2" rx="2.3" ry="2.4" fill="#d9792a"/><ellipse cx="200.0" cy="162.6" rx="2.2" ry="2.2" fill="#d9792a"/><ellipse cx="194.9" cy="168.6" rx="2.3" ry="2.4" fill="#d9792a"/><ellipse cx="188.1" cy="167.7" rx="2.2" ry="2.5" fill="#d9792a"/><ellipse cx="184.7" cy="154.1" rx="2.2" ry="2.1" fill="#d9792a"/><ellipse cx="178.8" cy="153.3" rx="2.4" ry="2.2" fill="#d9792a"/><ellipse cx="167.7" cy="153.3" rx="2.2" ry="2.3" fill="#d9792a"/><ellipse cx="170.3" cy="149.0" rx="2.1" ry="2.4" fill="#d9792a"/><ellipse cx="159.2" cy="150.7" rx="2.4" ry="2.4" fill="#d9792a"/><ellipse cx="149.0" cy="153.3" rx="2.4" ry="2.2" fill="#d9792a"/><ellipse cx="152.4" cy="153.6" rx="2.3" ry="2.2" fill="#d9792a"/><ellipse cx="142.2" cy="156.7" rx="2.5" ry="2.0" fill="#d9792a"/><ellipse cx="133.7" cy="158.7" rx="2.5" ry="2.0" fill="#d9792a"/><ellipse cx="122.7" cy="155.3" rx="2.2" ry="2.1" fill="#d9792a"/><ellipse cx="109.9" cy="160.1" rx="2.6" ry="2.3" fill="#d9792a"/><ellipse cx="122.7" cy="163.5" rx="2.3" ry="2.4" fill="#d9792a"/><ellipse cx="115.0" cy="168.6" rx="2.2" ry="2.2" fill="#d9792a"/><ellipse cx="106.5" cy="171.1" rx="2.4" ry="2.4" fill="#d9792a"/><ellipse cx="118.4" cy="176.2" rx="2.5" ry="2.3" fill="#d9792a"/><ellipse cx="132.9" cy="168.6" rx="2.3" ry="2.2" fill="#d9792a"/><ellipse cx="141.4" cy="172.0" rx="2.2" ry="2.4" fill="#d9792a"/><ellipse cx="149.0" cy="165.5" rx="2.4" ry="2.4" fill="#d9792a"/><ellipse cx="155.8" cy="160.9" rx="2.2" ry="2.2" fill="#d9792a"/><ellipse cx="158.4" cy="165.5" rx="2.5" ry="2.3" fill="#d9792a"/><ellipse cx="163.5" cy="168.6" rx="2.2" ry="2.2" fill="#d9792a"/><ellipse cx="164.3" cy="173.7" rx="2.5" ry="2.1" fill="#d9792a"/><ellipse cx="171.1" cy="164.3" rx="2.2" ry="2.2" fill="#d9792a"/><ellipse cx="180.5" cy="162.6" rx="2.5" ry="2.4" fill="#d9792a"/><ellipse cx="196.6" cy="174.5" rx="2.2" ry="2.1" fill="#d9792a"/><ellipse cx="183.9" cy="177.1" rx="2.2" ry="2.2" fill="#d9792a"/><ellipse cx="192.4" cy="178.8" rx="2.4" ry="2.1" fill="#d9792a"/><ellipse cx="201.7" cy="181.3" rx="2.3" ry="2.1" fill="#d9792a"/><ellipse cx="206.0" cy="185.6" rx="2.6" ry="2.4" fill="#d9792a"/><ellipse cx="168.6" cy="180.5" rx="2.2" ry="2.5" fill="#d9792a"/><ellipse cx="153.3" cy="177.9" rx="2.2" ry="2.2" fill="#d9792a"/><ellipse cx="155.0" cy="182.2" rx="2.6" ry="2.4" fill="#d9792a"/><ellipse cx="143.9" cy="182.2" rx="2.5" ry="2.2" fill="#d9792a"/><ellipse cx="131.5" cy="178.8" rx="2.2" ry="2.3" fill="#d9792a"/><ellipse cx="108.2" cy="183.9" rx="2.2" ry="2.1" fill="#d9792a"/><ellipse cx="133.7" cy="186.9" rx="2.3" ry="2.0" fill="#d9792a"/><ellipse cx="156.7" cy="188.1" rx="2.3" ry="2.4" fill="#d9792a"/><ellipse cx="164.3" cy="186.4" rx="2.4" ry="2.3" fill="#d9792a"/><ellipse cx="169.4" cy="190.7" rx="2.4" ry="2.2" fill="#d9792a"/><ellipse cx="188.1" cy="190.7" rx="2.2" ry="2.3" fill="#d9792a"/><ellipse cx="194.1" cy="189.0" rx="2.3" ry="2.4" fill="#d9792a"/><ellipse cx="200.0" cy="192.4" rx="2.6" ry="2.2" fill="#d9792a"/><ellipse cx="145.6" cy="193.2" rx="2.4" ry="2.4" fill="#d9792a"/><ellipse cx="142.7" cy="197.5" rx="2.3" ry="2.1" fill="#d9792a"/><ellipse cx="124.4" cy="196.6" rx="2.5" ry="2.4" fill="#d9792a"/><ellipse cx="109.9" cy="197.5" rx="2.5" ry="2.4" fill="#d9792a"/><ellipse cx="120.1" cy="195.8" rx="2.5" ry="2.3" fill="#d9792a"/><ellipse cx="119.0" cy="200.9" rx="2.4" ry="2.2" fill="#d9792a"/><ellipse cx="149.9" cy="202.6" rx="2.3" ry="2.3" fill="#d9792a"/><ellipse cx="155.0" cy="199.2" rx="2.1" ry="2.2" fill="#d9792a"/><ellipse cx="160.1" cy="195.8" rx="2.5" ry="2.4" fill="#d9792a"/><ellipse cx="177.9" cy="194.1" rx="2.4" ry="2.1" fill="#d9792a"/><ellipse cx="189.8" cy="197.5" rx="2.3" ry="2.2" fill="#d9792a"/><ellipse cx="202.6" cy="197.5" rx="2.4" ry="2.2" fill="#d9792a"/><ellipse cx="198.3" cy="204.3" rx="2.4" ry="2.5" fill="#d9792a"/><ellipse cx="187.3" cy="172.0" rx="2.2" ry="2.3" fill="#d9792a"/><ellipse cx="187.3" cy="107.1" rx="2.5" ry="2.2" fill="#d9792a"/><ellipse cx="107.4" cy="119.3" rx="2.3" ry="2.5" fill="#d9792a"/><ellipse cx="139.7" cy="110.8" rx="2.0" ry="1.8" fill="#3b8ccc"/><ellipse cx="155.0" cy="109.1" rx="2.1" ry="1.9" fill="#3b8ccc"/><ellipse cx="156.7" cy="105.7" rx="2.4" ry="1.8" fill="#3b8ccc"/><ellipse cx="108.8" cy="137.6" rx="2.0" ry="1.8" fill="#3b8ccc"/><ellipse cx="164.3" cy="147.8" rx="2.2" ry="1.9" fill="#3b8ccc"/><ellipse cx="176.2" cy="147.8" rx="2.2" ry="1.9" fill="#3b8ccc"/><ellipse cx="163.1" cy="158.0" rx="2.3" ry="1.8" fill="#3b8ccc"/><ellipse cx="179.1" cy="164.8" rx="2.2" ry="2.0" fill="#3b8ccc"/><ellipse cx="202.6" cy="166.0" rx="2.1" ry="1.9" fill="#3b8ccc"/><ellipse cx="179.6" cy="171.1" rx="2.2" ry="1.9" fill="#3b8ccc"/><ellipse cx="139.3" cy="170.3" rx="2.0" ry="2.0" fill="#3b8ccc"/><ellipse cx="140.0" cy="175.0" rx="2.1" ry="1.6" fill="#3b8ccc"/><ellipse cx="186.9" cy="183.9" rx="2.1" ry="1.8" fill="#3b8ccc"/><ellipse cx="168.2" cy="194.9" rx="2.0" ry="1.8" fill="#3b8ccc"/><ellipse cx="130.3" cy="196.6" rx="2.2" ry="1.9" fill="#3b8ccc"/><ellipse cx="130.3" cy="199.2" rx="2.1" ry="1.7" fill="#3b8ccc"/><ellipse cx="137.1" cy="201.7" rx="2.1" ry="1.9" fill="#3b8ccc"/><ellipse cx="187.3" cy="104.8" rx="2.4" ry="1.8" fill="#3b8ccc"/><ellipse cx="189.0" cy="108.2" rx="2.1" ry="1.9" fill="#3b8ccc"/></svg></div>
<div class="a" style="left:521px;top:46px;width:1px;height:544px;background:#414851"></div>
<svg style="left:532px;top:52px" width="7" height="6" viewBox="0 0 7 6"><path d="M0.6,4.6 C1.5,2 4.5,1 6.3,2 C5.8,4 3,5.2 0.6,4.6Z" fill="#c9cbce"/><path d="M1.5,3.6 L5.5,2.4" stroke="#262930" stroke-width="0.7"/></svg>
<svg style="left:545px;top:52px" width="7" height="7" viewBox="0 0 7 7"><rect x="0.9" y="0.9" width="4.6" height="4.6" rx="1.2" fill="none" stroke="#d8d9db" stroke-width="1.3"/><path d="M3.5,6 H6.3 V3.2" stroke="#c0c2c5" stroke-width="1.1" fill="none"/></svg>
<div class="a" style="left:557px;top:56px;width:305px;height:1px;background:#414851"></div><div class="a" style="left:0;top:40px;width:1024px;height:22px;overflow:hidden"><div class="t" style="left:869.50px;top:10.50px;font-size:13px;line-height:13px;transform:scaleX(0.9779);transform-origin:0 0;color:#5a626c;">Plot measurements (ncp)</div></div>
<svg style="left:0;top:0" width="1024" height="120" viewBox="0 0 1024 120">
<rect x="609" y="77" width="1" height="19" fill="#2c2f36"/><rect x="714" y="77" width="1" height="19" fill="#2c2f36"/>
<g fill="#fff" stroke="none">
 <path d="M537,88.8 L545.2,81.4 L553.4,88.8" fill="none" stroke="#fff" stroke-width="1.6" stroke-linecap="round"/>
 <path d="M539,89.2 L545.2,83.8 L551.5,89.2 V95 H546.9 V90.8 H543.6 V95 H539Z"/>
 <rect x="548.6" y="81" width="2.5" height="4"/>
</g>
<g fill="none" stroke="#fff" stroke-width="3.3" stroke-linecap="round" stroke-linejoin="round">
 <path d="M578,86.8 H563.5 M571.6,79.8 L563,86.8 L571.6,94"/>
 <path d="M587,86.8 H601.5 M594.4,79.8 L602.8,86.8 L594.4,94"/>
</g>
<g fill="#fff">
 <path d="M623.7,80.5 V93 M617.5,86.8 H632" stroke="#fff" stroke-width="2.2" fill="none"/>
 <path d="M624.8,76.8 L628.6,80.8 Q629,81.5 628.2,81.6 L621.4,81.6 Q620.6,81.5 621,80.8Z"/>
 <path d="M624.8,96.8 L628.6,92.8 Q629,92.1 628.2,92 L621.4,92 Q620.6,92.1 621,92.8Z"/>
 <path d="M614.9,86.8 L618.9,83 Q619.6,82.6 619.7,83.4 L619.7,90.2 Q619.6,91 618.9,90.6Z"/>
 <path d="M634.7,86.8 L630.7,83 Q630,82.6 629.9,83.4 L629.9,90.2 Q630,91 630.7,90.6Z"/>
</g>
<g fill="none" stroke="#fff" stroke-linecap="round">
 <circle cx="647.9" cy="85.2" r="6" stroke-width="2.3"/>
 <path d="M652.6,90.2 L657.3,94.8" stroke-width="2.8"/>
</g>
<g fill="#fff">
 <rect x="666.2" y="81" width="16.4" height="1.7"/><rect x="666.2" y="86.6" width="16.4" height="1.7"/><rect x="666.2" y="92.1" width="16.4" height="1.7"/>
 <rect x="668.6" y="79.7" width="4.3" height="4.3" rx="0.8"/><rect x="675.7" y="85.3" width="4.3" height="4.3" rx="0.8"/><rect x="670.1" y="90.8" width="4.3" height="4.3" rx="0.8"/>
</g>
<g fill="none" stroke="#fff">
 <path d="M689.4,78.2 V94.6 H709.7" stroke-width="1.3"/>
 <path d="M691.8,90.6 L696.8,86.3 L699.5,88.4 L705,83" stroke-width="2.6" stroke-linecap="round" stroke-linejoin="round"/>
 <path d="M703.2,79.8 H708.9 V85.3Z" fill="#fff" stroke-width="0.6"/>
</g>
<g fill="none" stroke="#fff">
 <path d="M721.5,79.1 H733.6 L737,82.5 V94.1 H721.5Z" stroke-width="1.7" stroke-linejoin="round"/>
 <path d="M723.8,79.2 H732.2 V84.5 H723.8Z" fill="#fff" stroke="none"/>
 <rect x="727.3" y="80.2" width="2.6" height="3.2" fill="#262930" stroke="none"/>
 <rect x="724.5" y="88.6" width="9.8" height="5.3" stroke-width="1.6"/>
</g>
</svg>
<div class="t" style="left:939.40px;top:82.73px;font-size:10px;line-height:10px;transform:scaleX(1.0205);transform-origin:0 0;">x=26.1 y=118.9</div><svg style="left:0;top:0" width="1024" height="612" viewBox="0 0 1024 612"><defs><clipPath id="ax"><rect x="593" y="142" width="372.4" height="262.4"/></clipPath></defs><g clip-path="url(#ax)"><g fill="#1f77b4" fill-opacity="0.24" stroke="#1f77b4" stroke-opacity="0.24" stroke-width="1"><circle cx="725.4" cy="248.9" r="2.8"/><circle cx="752.6" cy="248.5" r="2.8"/><circle cx="753.8" cy="250.1" r="2.8"/><circle cx="765.0" cy="248.0" r="2.8"/><circle cx="787.1" cy="234.9" r="2.8"/><circle cx="801.9" cy="241.9" r="2.8"/><circle cx="811.9" cy="246.9" r="2.8"/><circle cx="758.0" cy="256.6" r="2.8"/><circle cx="781.0" cy="257.9" r="2.8"/><circle cx="790.7" cy="262.9" r="2.8"/><circle cx="794.7" cy="270.3" r="2.8"/><circle cx="717.0" cy="270.3" r="2.8"/><circle cx="729.6" cy="265.6" r="2.8"/><circle cx="740.9" cy="266.3" r="2.8"/><circle cx="745.7" cy="262.9" r="2.8"/><circle cx="765.5" cy="267.2" r="2.8"/><circle cx="739.6" cy="274.0" r="2.8"/><circle cx="758.0" cy="276.4" r="2.8"/><circle cx="754.0" cy="281.8" r="2.8"/><circle cx="766.2" cy="281.1" r="2.8"/><circle cx="718.4" cy="281.6" r="2.8"/><circle cx="714.5" cy="287.2" r="2.8"/><circle cx="823.4" cy="278.5" r="2.8"/><circle cx="751.9" cy="294.0" r="2.8"/><circle cx="718.4" cy="297.1" r="2.8"/><circle cx="724.2" cy="298.3" r="2.8"/><circle cx="729.9" cy="299.6" r="2.8"/><circle cx="775.6" cy="306.2" r="2.8"/><circle cx="947.6" cy="153.0" r="2.8"/><circle cx="923.5" cy="171.3" r="2.8"/><circle cx="794.5" cy="193.2" r="2.8"/><circle cx="837.3" cy="205.2" r="2.8"/><circle cx="853.5" cy="205.2" r="2.8"/><circle cx="825.8" cy="220.4" r="2.8"/><circle cx="767.3" cy="228.2" r="2.8"/><circle cx="771.0" cy="227.2" r="2.8"/></g><g fill="#ff7f0e" fill-opacity="0.3" stroke="#ff7f0e" stroke-opacity="0.3" stroke-width="1"><circle cx="643.1" cy="341.9" r="2.8"/><circle cx="643.6" cy="348.1" r="2.8"/><circle cx="631.6" cy="356.7" r="2.8"/><circle cx="666.5" cy="324.2" r="2.8"/><circle cx="665.3" cy="326.6" r="2.8"/><circle cx="654.3" cy="335.7" r="2.8"/><circle cx="619.0" cy="358.1" r="2.8"/><circle cx="656.2" cy="331.7" r="2.8"/><circle cx="618.6" cy="379.1" r="2.8"/><circle cx="632.3" cy="358.2" r="2.8"/><circle cx="652.7" cy="338.8" r="2.8"/><circle cx="656.4" cy="340.6" r="2.8"/><circle cx="652.8" cy="335.2" r="2.8"/><circle cx="636.2" cy="337.7" r="2.8"/><circle cx="657.0" cy="325.5" r="2.8"/><circle cx="636.9" cy="356.7" r="2.8"/><circle cx="641.6" cy="348.0" r="2.8"/><circle cx="658.3" cy="332.1" r="2.8"/><circle cx="639.9" cy="356.1" r="2.8"/><circle cx="638.6" cy="339.8" r="2.8"/><circle cx="633.7" cy="351.4" r="2.8"/><circle cx="654.8" cy="348.6" r="2.8"/><circle cx="648.3" cy="331.5" r="2.8"/><circle cx="642.0" cy="347.7" r="2.8"/><circle cx="633.5" cy="349.5" r="2.8"/><circle cx="646.4" cy="355.0" r="2.8"/><circle cx="661.7" cy="326.1" r="2.8"/><circle cx="663.7" cy="318.4" r="2.8"/><circle cx="653.7" cy="336.7" r="2.8"/><circle cx="625.3" cy="355.1" r="2.8"/><circle cx="637.0" cy="354.3" r="2.8"/><circle cx="625.9" cy="367.2" r="2.8"/><circle cx="638.4" cy="339.4" r="2.8"/><circle cx="622.6" cy="360.2" r="2.8"/><circle cx="672.2" cy="318.5" r="2.8"/><circle cx="653.6" cy="343.6" r="2.8"/><circle cx="628.4" cy="349.8" r="2.8"/><circle cx="666.4" cy="326.5" r="2.8"/><circle cx="651.7" cy="335.8" r="2.8"/><circle cx="674.8" cy="316.2" r="2.8"/><circle cx="656.4" cy="331.2" r="2.8"/><circle cx="620.7" cy="353.4" r="2.8"/><circle cx="663.9" cy="325.5" r="2.8"/><circle cx="636.7" cy="344.3" r="2.8"/><circle cx="644.4" cy="336.9" r="2.8"/><circle cx="625.1" cy="347.3" r="2.8"/><circle cx="657.0" cy="336.3" r="2.8"/><circle cx="653.1" cy="333.0" r="2.8"/><circle cx="649.6" cy="331.8" r="2.8"/><circle cx="636.2" cy="354.7" r="2.8"/><circle cx="665.3" cy="328.3" r="2.8"/><circle cx="632.4" cy="346.8" r="2.8"/><circle cx="672.6" cy="326.4" r="2.8"/><circle cx="623.9" cy="362.1" r="2.8"/><circle cx="645.0" cy="346.9" r="2.8"/><circle cx="671.5" cy="331.8" r="2.8"/><circle cx="669.1" cy="335.7" r="2.8"/><circle cx="634.0" cy="348.1" r="2.8"/><circle cx="666.8" cy="320.5" r="2.8"/><circle cx="653.4" cy="336.7" r="2.8"/><circle cx="650.1" cy="335.9" r="2.8"/><circle cx="644.5" cy="342.7" r="2.8"/><circle cx="657.3" cy="334.8" r="2.8"/><circle cx="660.6" cy="327.8" r="2.8"/><circle cx="681.9" cy="312.9" r="2.8"/><circle cx="640.2" cy="351.2" r="2.8"/><circle cx="647.3" cy="335.3" r="2.8"/><circle cx="641.8" cy="344.0" r="2.8"/><circle cx="678.9" cy="338.2" r="2.8"/><circle cx="628.3" cy="355.7" r="2.8"/><circle cx="654.3" cy="335.3" r="2.8"/><circle cx="640.1" cy="343.1" r="2.8"/><circle cx="652.3" cy="342.9" r="2.8"/><circle cx="689.1" cy="307.1" r="2.8"/><circle cx="638.0" cy="350.7" r="2.8"/><circle cx="643.7" cy="346.0" r="2.8"/><circle cx="639.2" cy="341.0" r="2.8"/><circle cx="627.5" cy="358.7" r="2.8"/><circle cx="663.8" cy="322.9" r="2.8"/><circle cx="673.0" cy="336.0" r="2.8"/><circle cx="641.5" cy="350.0" r="2.8"/><circle cx="658.2" cy="325.5" r="2.8"/><circle cx="666.1" cy="339.4" r="2.8"/><circle cx="659.2" cy="345.2" r="2.8"/><circle cx="650.5" cy="330.6" r="2.8"/><circle cx="645.0" cy="343.0" r="2.8"/><circle cx="661.1" cy="330.7" r="2.8"/><circle cx="646.0" cy="331.5" r="2.8"/><circle cx="665.5" cy="330.8" r="2.8"/><circle cx="694.5" cy="314.8" r="2.8"/><circle cx="663.2" cy="332.3" r="2.8"/><circle cx="649.8" cy="335.1" r="2.8"/><circle cx="651.3" cy="334.4" r="2.8"/><circle cx="621.4" cy="375.0" r="2.8"/><circle cx="658.0" cy="341.9" r="2.8"/><circle cx="629.9" cy="368.0" r="2.8"/><circle cx="669.2" cy="319.6" r="2.8"/><circle cx="672.7" cy="330.2" r="2.8"/><circle cx="647.5" cy="351.6" r="2.8"/><circle cx="660.6" cy="319.6" r="2.8"/><circle cx="632.3" cy="342.0" r="2.8"/><circle cx="664.4" cy="330.7" r="2.8"/><circle cx="671.6" cy="324.4" r="2.8"/><circle cx="637.2" cy="347.4" r="2.8"/><circle cx="654.5" cy="325.1" r="2.8"/><circle cx="630.1" cy="347.2" r="2.8"/><circle cx="673.0" cy="311.0" r="2.8"/><circle cx="644.4" cy="350.9" r="2.8"/><circle cx="664.9" cy="327.9" r="2.8"/><circle cx="649.6" cy="329.5" r="2.8"/><circle cx="643.0" cy="364.3" r="2.8"/><circle cx="640.9" cy="362.5" r="2.8"/><circle cx="661.5" cy="329.0" r="2.8"/><circle cx="637.1" cy="350.8" r="2.8"/><circle cx="661.8" cy="330.7" r="2.8"/><circle cx="670.2" cy="325.2" r="2.8"/><circle cx="665.3" cy="316.7" r="2.8"/><circle cx="675.1" cy="326.2" r="2.8"/><circle cx="662.6" cy="345.6" r="2.8"/><circle cx="629.0" cy="372.7" r="2.8"/><circle cx="665.8" cy="338.0" r="2.8"/><circle cx="647.3" cy="344.2" r="2.8"/><circle cx="647.0" cy="347.6" r="2.8"/><circle cx="651.5" cy="325.1" r="2.8"/><circle cx="648.3" cy="337.7" r="2.8"/><circle cx="664.6" cy="330.7" r="2.8"/><circle cx="626.0" cy="363.8" r="2.8"/><circle cx="665.9" cy="341.2" r="2.8"/><circle cx="637.3" cy="342.5" r="2.8"/><circle cx="661.1" cy="331.8" r="2.8"/><circle cx="661.3" cy="330.4" r="2.8"/><circle cx="627.3" cy="370.8" r="2.8"/><circle cx="636.6" cy="343.7" r="2.8"/><circle cx="637.8" cy="357.3" r="2.8"/><circle cx="634.3" cy="365.0" r="2.8"/><circle cx="645.5" cy="353.5" r="2.8"/><circle cx="653.7" cy="356.4" r="2.8"/><circle cx="653.1" cy="343.2" r="2.8"/><circle cx="659.9" cy="335.0" r="2.8"/><circle cx="632.5" cy="351.9" r="2.8"/><circle cx="639.7" cy="342.5" r="2.8"/><circle cx="660.3" cy="327.2" r="2.8"/><circle cx="653.1" cy="327.5" r="2.8"/><circle cx="658.8" cy="330.1" r="2.8"/><circle cx="662.9" cy="320.1" r="2.8"/><circle cx="642.4" cy="350.2" r="2.8"/><circle cx="680.7" cy="330.5" r="2.8"/><circle cx="655.5" cy="316.9" r="2.8"/><circle cx="631.6" cy="349.5" r="2.8"/><circle cx="679.8" cy="318.1" r="2.8"/><circle cx="657.1" cy="327.8" r="2.8"/><circle cx="632.0" cy="355.4" r="2.8"/><circle cx="652.5" cy="332.0" r="2.8"/><circle cx="646.9" cy="344.5" r="2.8"/><circle cx="630.1" cy="359.0" r="2.8"/><circle cx="662.8" cy="329.7" r="2.8"/><circle cx="632.9" cy="360.7" r="2.8"/><circle cx="693.1" cy="297.6" r="2.8"/><circle cx="658.4" cy="354.6" r="2.8"/><circle cx="658.1" cy="330.3" r="2.8"/><circle cx="676.3" cy="316.5" r="2.8"/><circle cx="646.4" cy="339.3" r="2.8"/><circle cx="665.2" cy="326.1" r="2.8"/><circle cx="635.5" cy="341.4" r="2.8"/><circle cx="678.5" cy="329.4" r="2.8"/><circle cx="636.1" cy="349.1" r="2.8"/><circle cx="650.6" cy="343.2" r="2.8"/><circle cx="630.8" cy="338.7" r="2.8"/><circle cx="665.3" cy="338.1" r="2.8"/><circle cx="624.5" cy="347.0" r="2.8"/><circle cx="664.4" cy="314.7" r="2.8"/><circle cx="661.4" cy="338.6" r="2.8"/><circle cx="652.0" cy="356.2" r="2.8"/><circle cx="634.7" cy="353.0" r="2.8"/><circle cx="656.5" cy="341.3" r="2.8"/><circle cx="645.4" cy="340.5" r="2.8"/><circle cx="654.0" cy="332.4" r="2.8"/><circle cx="651.1" cy="342.3" r="2.8"/><circle cx="661.0" cy="331.5" r="2.8"/><circle cx="633.4" cy="358.6" r="2.8"/><circle cx="647.5" cy="343.4" r="2.8"/><circle cx="650.2" cy="340.4" r="2.8"/><circle cx="650.5" cy="341.2" r="2.8"/><circle cx="626.0" cy="356.1" r="2.8"/><circle cx="665.5" cy="324.9" r="2.8"/><circle cx="644.3" cy="341.5" r="2.8"/><circle cx="631.0" cy="370.6" r="2.8"/><circle cx="648.5" cy="349.1" r="2.8"/><circle cx="660.2" cy="341.2" r="2.8"/><circle cx="629.7" cy="343.9" r="2.8"/><circle cx="641.0" cy="358.5" r="2.8"/><circle cx="634.4" cy="348.6" r="2.8"/><circle cx="656.0" cy="334.4" r="2.8"/><circle cx="672.9" cy="317.0" r="2.8"/><circle cx="647.2" cy="338.0" r="2.8"/><circle cx="675.8" cy="312.6" r="2.8"/><circle cx="665.0" cy="337.4" r="2.8"/><circle cx="645.0" cy="338.7" r="2.8"/><circle cx="642.4" cy="338.0" r="2.8"/><circle cx="657.7" cy="327.3" r="2.8"/><circle cx="643.9" cy="325.1" r="2.8"/><circle cx="668.7" cy="327.6" r="2.8"/><circle cx="649.1" cy="320.7" r="2.8"/><circle cx="641.6" cy="340.2" r="2.8"/><circle cx="664.3" cy="329.3" r="2.8"/><circle cx="627.5" cy="356.7" r="2.8"/><circle cx="653.7" cy="328.7" r="2.8"/><circle cx="660.9" cy="331.8" r="2.8"/><circle cx="662.1" cy="326.8" r="2.8"/><circle cx="651.0" cy="339.3" r="2.8"/><circle cx="643.3" cy="340.3" r="2.8"/><circle cx="629.5" cy="361.7" r="2.8"/><circle cx="647.6" cy="354.1" r="2.8"/><circle cx="640.1" cy="364.3" r="2.8"/><circle cx="635.8" cy="347.2" r="2.8"/><circle cx="657.2" cy="335.3" r="2.8"/><circle cx="643.5" cy="356.9" r="2.8"/><circle cx="678.8" cy="313.9" r="2.8"/><circle cx="666.2" cy="334.9" r="2.8"/><circle cx="644.3" cy="359.5" r="2.8"/><circle cx="660.9" cy="324.6" r="2.8"/><circle cx="646.6" cy="338.2" r="2.8"/><circle cx="629.3" cy="361.8" r="2.8"/><circle cx="623.5" cy="361.1" r="2.8"/><circle cx="651.8" cy="334.1" r="2.8"/><circle cx="659.5" cy="321.1" r="2.8"/><circle cx="667.4" cy="337.3" r="2.8"/><circle cx="638.9" cy="357.7" r="2.8"/><circle cx="629.1" cy="357.6" r="2.8"/><circle cx="647.6" cy="338.5" r="2.8"/><circle cx="620.4" cy="373.7" r="2.8"/><circle cx="647.1" cy="344.4" r="2.8"/><circle cx="642.2" cy="347.2" r="2.8"/><circle cx="634.5" cy="347.1" r="2.8"/><circle cx="653.6" cy="338.5" r="2.8"/><circle cx="636.0" cy="352.9" r="2.8"/><circle cx="630.7" cy="355.4" r="2.8"/><circle cx="621.8" cy="361.1" r="2.8"/><circle cx="650.0" cy="351.5" r="2.8"/><circle cx="643.2" cy="348.4" r="2.8"/><circle cx="655.4" cy="331.5" r="2.8"/><circle cx="646.9" cy="349.8" r="2.8"/><circle cx="645.0" cy="345.0" r="2.8"/><circle cx="660.1" cy="330.3" r="2.8"/><circle cx="635.1" cy="363.0" r="2.8"/><circle cx="641.1" cy="353.4" r="2.8"/><circle cx="628.5" cy="358.4" r="2.8"/><circle cx="639.1" cy="348.3" r="2.8"/><circle cx="656.5" cy="338.8" r="2.8"/><circle cx="687.3" cy="313.9" r="2.8"/><circle cx="666.4" cy="326.8" r="2.8"/><circle cx="666.6" cy="346.4" r="2.8"/><circle cx="634.7" cy="350.6" r="2.8"/><circle cx="657.8" cy="315.8" r="2.8"/><circle cx="653.0" cy="328.0" r="2.8"/><circle cx="660.6" cy="324.7" r="2.8"/><circle cx="656.2" cy="336.9" r="2.8"/><circle cx="656.2" cy="344.3" r="2.8"/><circle cx="667.7" cy="334.7" r="2.8"/><circle cx="651.8" cy="322.3" r="2.8"/><circle cx="643.7" cy="345.4" r="2.8"/><circle cx="667.4" cy="326.7" r="2.8"/><circle cx="633.7" cy="351.3" r="2.8"/><circle cx="657.5" cy="329.0" r="2.8"/><circle cx="634.3" cy="338.9" r="2.8"/><circle cx="676.0" cy="320.0" r="2.8"/><circle cx="652.1" cy="342.3" r="2.8"/><circle cx="671.7" cy="329.1" r="2.8"/><circle cx="659.0" cy="337.3" r="2.8"/><circle cx="635.6" cy="346.1" r="2.8"/><circle cx="670.3" cy="324.7" r="2.8"/><circle cx="635.9" cy="345.2" r="2.8"/><circle cx="646.7" cy="340.7" r="2.8"/><circle cx="673.6" cy="313.1" r="2.8"/><circle cx="638.6" cy="331.3" r="2.8"/><circle cx="647.6" cy="336.2" r="2.8"/><circle cx="636.4" cy="351.6" r="2.8"/><circle cx="617.6" cy="351.8" r="2.8"/><circle cx="670.9" cy="333.8" r="2.8"/><circle cx="621.8" cy="375.6" r="2.8"/><circle cx="667.6" cy="330.4" r="2.8"/><circle cx="646.5" cy="345.8" r="2.8"/><circle cx="645.4" cy="352.8" r="2.8"/><circle cx="647.9" cy="353.6" r="2.8"/><circle cx="646.3" cy="341.0" r="2.8"/><circle cx="655.5" cy="338.1" r="2.8"/><circle cx="632.0" cy="353.4" r="2.8"/><circle cx="639.2" cy="336.6" r="2.8"/><circle cx="660.6" cy="333.1" r="2.8"/><circle cx="639.4" cy="354.4" r="2.8"/><circle cx="631.5" cy="357.9" r="2.8"/><circle cx="652.6" cy="334.5" r="2.8"/><circle cx="657.2" cy="318.2" r="2.8"/><circle cx="635.5" cy="351.9" r="2.8"/><circle cx="695.3" cy="319.8" r="2.8"/><circle cx="638.6" cy="348.2" r="2.8"/><circle cx="650.2" cy="337.2" r="2.8"/><circle cx="643.4" cy="342.8" r="2.8"/><circle cx="648.4" cy="335.7" r="2.8"/><circle cx="632.4" cy="354.4" r="2.8"/><circle cx="629.9" cy="364.7" r="2.8"/><circle cx="658.3" cy="339.3" r="2.8"/><circle cx="658.4" cy="328.1" r="2.8"/><circle cx="652.8" cy="334.4" r="2.8"/><circle cx="645.7" cy="355.1" r="2.8"/><circle cx="647.0" cy="339.3" r="2.8"/><circle cx="638.5" cy="350.4" r="2.8"/><circle cx="660.3" cy="339.4" r="2.8"/><circle cx="658.5" cy="319.1" r="2.8"/><circle cx="638.0" cy="348.8" r="2.8"/><circle cx="644.9" cy="332.3" r="2.8"/><circle cx="652.9" cy="331.1" r="2.8"/><circle cx="635.7" cy="351.9" r="2.8"/><circle cx="647.3" cy="356.8" r="2.8"/><circle cx="672.2" cy="316.0" r="2.8"/><circle cx="617.6" cy="360.1" r="2.8"/><circle cx="645.3" cy="340.7" r="2.8"/><circle cx="653.8" cy="349.5" r="2.8"/><circle cx="643.9" cy="333.5" r="2.8"/><circle cx="637.7" cy="358.4" r="2.8"/><circle cx="677.7" cy="312.2" r="2.8"/><circle cx="692.8" cy="308.3" r="2.8"/><circle cx="686.4" cy="297.1" r="2.8"/><circle cx="668.1" cy="331.5" r="2.8"/><circle cx="661.6" cy="319.3" r="2.8"/><circle cx="683.5" cy="316.3" r="2.8"/><circle cx="684.4" cy="308.6" r="2.8"/><circle cx="677.8" cy="314.4" r="2.8"/><circle cx="697.6" cy="307.3" r="2.8"/><circle cx="667.9" cy="321.2" r="2.8"/><circle cx="670.7" cy="318.5" r="2.8"/><circle cx="687.8" cy="316.7" r="2.8"/><circle cx="687.5" cy="308.0" r="2.8"/><circle cx="657.9" cy="338.5" r="2.8"/><circle cx="688.2" cy="303.3" r="2.8"/><circle cx="690.8" cy="301.0" r="2.8"/><circle cx="701.6" cy="307.0" r="2.8"/><circle cx="667.1" cy="314.5" r="2.8"/><circle cx="670.1" cy="308.1" r="2.8"/><circle cx="665.1" cy="328.7" r="2.8"/><circle cx="687.4" cy="303.0" r="2.8"/><circle cx="674.7" cy="320.0" r="2.8"/><circle cx="662.9" cy="309.7" r="2.8"/><circle cx="674.7" cy="314.9" r="2.8"/><circle cx="690.5" cy="288.9" r="2.8"/><circle cx="671.7" cy="322.0" r="2.8"/><circle cx="691.2" cy="285.2" r="2.8"/><circle cx="674.0" cy="326.4" r="2.8"/><circle cx="664.2" cy="323.4" r="2.8"/><circle cx="672.7" cy="323.7" r="2.8"/><circle cx="609.2" cy="382.0" r="2.8"/><circle cx="617.0" cy="392.2" r="2.8"/><circle cx="615.7" cy="376.5" r="2.8"/><circle cx="614.1" cy="371.2" r="2.8"/><circle cx="623.1" cy="343.1" r="2.8"/><circle cx="631.4" cy="334.5" r="2.8"/><circle cx="648.6" cy="359.4" r="2.8"/><circle cx="658.4" cy="352.0" r="2.8"/><circle cx="644.1" cy="311.4" r="2.8"/><circle cx="649.4" cy="309.0" r="2.8"/><circle cx="661.2" cy="307.0" r="2.8"/><circle cx="667.0" cy="297.3" r="2.8"/><circle cx="676.9" cy="297.3" r="2.8"/><circle cx="695.5" cy="289.8" r="2.8"/><circle cx="689.8" cy="295.7" r="2.8"/><circle cx="703.9" cy="301.6" r="2.8"/><circle cx="703.3" cy="314.9" r="2.8"/><circle cx="684.7" cy="332.5" r="2.8"/><circle cx="677.5" cy="335.9" r="2.8"/><circle cx="665.7" cy="344.7" r="2.8"/><circle cx="683.3" cy="309.4" r="2.8"/><circle cx="692.2" cy="315.3" r="2.8"/><circle cx="700.0" cy="305.0" r="2.8"/><circle cx="698.0" cy="296.0" r="2.8"/><circle cx="704.0" cy="312.0" r="2.8"/><circle cx="640.2" cy="353.5" r="2.8"/><circle cx="628.4" cy="368.2" r="2.8"/><circle cx="638.0" cy="346.6" r="2.8"/><circle cx="631.9" cy="353.4" r="2.8"/><circle cx="631.0" cy="358.1" r="2.8"/><circle cx="639.5" cy="351.5" r="2.8"/><circle cx="639.2" cy="348.7" r="2.8"/><circle cx="625.7" cy="372.6" r="2.8"/><circle cx="637.1" cy="349.9" r="2.8"/><circle cx="625.8" cy="362.1" r="2.8"/><circle cx="639.5" cy="352.9" r="2.8"/><circle cx="629.2" cy="361.6" r="2.8"/><circle cx="630.5" cy="372.0" r="2.8"/><circle cx="629.5" cy="354.0" r="2.8"/><circle cx="629.3" cy="363.3" r="2.8"/><circle cx="636.4" cy="357.5" r="2.8"/><circle cx="625.3" cy="360.5" r="2.8"/><circle cx="637.0" cy="348.6" r="2.8"/><circle cx="639.9" cy="356.9" r="2.8"/><circle cx="625.6" cy="363.6" r="2.8"/><circle cx="640.1" cy="346.7" r="2.8"/><circle cx="640.1" cy="356.0" r="2.8"/></g><path d="M708.0,227.3 C709.0,227.4 711.9,227.2 713.7,227.6 C715.5,227.9 716.7,229.1 718.6,229.4 C720.5,229.7 723.9,230.3 725.1,229.4 C726.3,228.5 724.5,225.4 725.6,224.0 C726.7,222.6 730.6,222.6 731.7,220.8 C732.8,219.0 731.7,215.9 732.2,213.4 C732.8,210.9 733.3,209.3 735.0,206.0 C736.7,202.7 739.7,197.5 742.3,193.8 C744.9,190.1 747.8,186.4 750.5,184.0 C753.2,181.6 755.1,180.9 758.6,179.1 C762.1,177.2 767.6,174.9 771.7,172.9 C775.8,170.9 779.0,168.7 783.1,166.9 C787.2,165.1 792.1,163.6 796.2,162.0 C800.3,160.4 804.6,158.6 807.6,157.5 C810.6,156.4 812.0,156.4 814.2,155.4 C816.4,154.4 818.0,152.8 820.7,151.3 C823.4,149.8 827.1,148.0 830.5,146.4 C833.9,144.8 839.3,142.7 841.1,141.9" stroke="#1f77b4" stroke-width="1.8" fill="none" stroke-linejoin="round"/><path d="M712.5,241.7 C711.6,243.0 708.5,246.4 707.1,249.8 C705.7,253.2 704.8,258.2 704.0,262.4 C703.2,266.6 702.8,270.8 702.6,275.0 C702.4,279.2 702.2,283.5 703.0,287.5 C703.8,291.5 705.4,295.9 707.1,299.2 C708.8,302.5 710.7,304.4 713.4,307.3 C716.1,310.2 719.7,313.9 723.3,316.3 C726.9,318.7 731.0,320.1 735.0,321.7 C739.0,323.2 743.0,324.8 747.5,325.6 C752.0,326.4 757.1,326.6 761.9,326.5 C766.7,326.4 771.5,326.2 776.3,325.3 C781.1,324.4 785.9,322.5 790.7,320.8 C795.5,319.1 800.3,317.2 805.1,315.4 C809.9,313.6 815.3,311.9 819.5,310.0 C823.7,308.1 826.9,305.6 830.3,303.7 C833.7,301.8 836.3,300.8 840.0,298.8 C843.7,296.8 847.8,294.6 852.6,291.6 C857.4,288.6 864.6,283.9 868.8,280.8 C873.0,277.7 875.3,275.4 877.8,273.1 C880.3,270.9 882.0,269.2 884.0,267.3 C886.0,265.4 886.9,264.6 889.5,262.0 C892.1,259.4 895.7,255.7 899.4,252.0 C903.1,248.3 908.8,244.0 911.9,240.0 C915.0,236.0 915.9,231.7 918.2,227.8 C920.6,223.9 923.8,219.3 926.0,216.6 C928.2,213.9 929.7,213.3 931.7,211.6 C933.7,209.9 935.9,208.4 938.0,206.2 C940.1,203.9 942.3,200.8 944.3,198.1 C946.2,195.4 947.9,192.4 949.7,190.0 C951.5,187.6 953.0,186.6 955.0,183.8 C957.0,181.0 960.2,175.8 961.5,173.1 C962.8,170.4 962.6,172.7 962.9,167.5 C963.2,162.3 963.4,146.2 963.5,141.9" stroke="#1f77b4" stroke-width="1.8" fill="none" stroke-linejoin="round"/></g><rect x="592.5" y="141.5" width="373" height="263" fill="none" stroke="#fff" stroke-width="1"/><path d="M589,153.5 H593" stroke="#fff" stroke-width="1"/><text x="583" y="157.5" text-anchor="end" font-size="12" fill="#fff" font-family="Liberation Sans" textLength="20.5" lengthAdjust="spacingAndGlyphs">160</text><path d="M589,189.5 H593" stroke="#fff" stroke-width="1"/><text x="583" y="193.7" text-anchor="end" font-size="12" fill="#fff" font-family="Liberation Sans" textLength="20.5" lengthAdjust="spacingAndGlyphs">140</text><path d="M589,225.5 H593" stroke="#fff" stroke-width="1"/><text x="583" y="229.79999999999998" text-anchor="end" font-size="12" fill="#fff" font-family="Liberation Sans" textLength="20.5" lengthAdjust="spacingAndGlyphs">120</text><path d="M589,261.5 H593" stroke="#fff" stroke-width="1"/><text x="583" y="266.0" text-anchor="end" font-size="12" fill="#fff" font-family="Liberation Sans" textLength="20.5" lengthAdjust="spacingAndGlyphs">100</text><path d="M589,298.5 H593" stroke="#fff" stroke-width="1"/><text x="583" y="302.20000000000005" text-anchor="end" font-size="12" fill="#fff" font-family="Liberation Sans" textLength="13.7" lengthAdjust="spacingAndGlyphs">80</text><path d="M589,334.5 H593" stroke="#fff" stroke-width="1"/><text x="583" y="338.3" text-anchor="end" font-size="12" fill="#fff" font-family="Liberation Sans" textLength="13.7" lengthAdjust="spacingAndGlyphs">60</text><path d="M589,370.5 H593" stroke="#fff" stroke-width="1"/><text x="583" y="374.5" text-anchor="end" font-size="12" fill="#fff" font-family="Liberation Sans" textLength="13.7" lengthAdjust="spacingAndGlyphs">40</text><path d="M630.5,405 V409" stroke="#fff" stroke-width="1"/><text x="630.4" y="422.3" text-anchor="middle" font-size="12" fill="#fff" font-family="Liberation Sans" textLength="13.7" lengthAdjust="spacingAndGlyphs">10</text><path d="M682.5,405 V409" stroke="#fff" stroke-width="1"/><text x="682.3" y="422.3" text-anchor="middle" font-size="12" fill="#fff" font-family="Liberation Sans" textLength="13.7" lengthAdjust="spacingAndGlyphs">20</text><path d="M734.5,405 V409" stroke="#fff" stroke-width="1"/><text x="734.1" y="422.3" text-anchor="middle" font-size="12" fill="#fff" font-family="Liberation Sans" textLength="13.7" lengthAdjust="spacingAndGlyphs">30</text><path d="M786.5,405 V409" stroke="#fff" stroke-width="1"/><text x="786.0" y="422.3" text-anchor="middle" font-size="12" fill="#fff" font-family="Liberation Sans" textLength="13.7" lengthAdjust="spacingAndGlyphs">40</text><path d="M837.5,405 V409" stroke="#fff" stroke-width="1"/><text x="837.8" y="422.3" text-anchor="middle" font-size="12" fill="#fff" font-family="Liberation Sans" textLength="13.7" lengthAdjust="spacingAndGlyphs">50</text><path d="M889.5,405 V409" stroke="#fff" stroke-width="1"/><text x="889.7" y="422.3" text-anchor="middle" font-size="12" fill="#fff" font-family="Liberation Sans" textLength="13.7" lengthAdjust="spacingAndGlyphs">60</text><path d="M941.5,405 V409" stroke="#fff" stroke-width="1"/><text x="941.5" y="422.3" text-anchor="middle" font-size="12" fill="#fff" font-family="Liberation Sans" textLength="13.7" lengthAdjust="spacingAndGlyphs">70</text><text x="778.5" y="438.6" text-anchor="middle" font-size="13.2" fill="#fff" font-family="Liberation Sans" textLength="170.3" lengthAdjust="spacingAndGlyphs">standard_deviation_intensity</text><text transform="translate(555.2,274.3) rotate(-90)" text-anchor="middle" font-size="13.2" fill="#fff" font-family="Liberation Sans" textLength="90" lengthAdjust="spacingAndGlyphs">mean_intensity</text></svg><div class="t" style="left:536.00px;top:448.69px;font-size:11px;line-height:11px;transform:scaleX(0.9040);transform-origin:0 0;font-weight:bold;">Plotting</div><div class="t" style="left:535.50px;top:470.39px;font-size:11px;line-height:11px;transform:scaleX(0.8262);transform-origin:0 0;">Labels layer</div><div class="t" style="left:535.70px;top:494.09px;font-size:11px;line-height:11px;transform:scaleX(0.8383);transform-origin:0 0;">Axes</div><div class="t" style="left:535.70px;top:517.89px;font-size:11px;line-height:11px;transform:scaleX(0.8179);transform-origin:0 0;">Clustering</div><div class="a" style="left:773px;top:465px;width:240px;height:19px;background:#414851;border-radius:2px"></div>
<svg style="left:996px;top:471px" width="11" height="7" viewBox="0 0 11 7"><path d="M0,0 H11 L5.5,6.5Z" fill="#9aa0a6"/></svg><div class="t" style="left:778.80px;top:469.89px;font-size:11px;line-height:11px;transform:scaleX(0.8236);transform-origin:0 0;color:#f0f1f2;">StarDist labels</div><div class="a" style="left:692px;top:489px;width:158px;height:19px;background:#414851;border-radius:2px"></div>
<svg style="left:833px;top:495px" width="11" height="7" viewBox="0 0 11 7"><path d="M0,0 H11 L5.5,6.5Z" fill="#9aa0a6"/></svg><div class="t" style="left:698.00px;top:493.99px;font-size:11px;line-height:11px;transform:scaleX(0.8557);transform-origin:0 0;color:#f0f1f2;">standard_deviation_intensity</div><div class="a" style="left:855px;top:489px;width:158px;height:19px;background:#414851;border-radius:2px"></div>
<svg style="left:996px;top:495px" width="11" height="7" viewBox="0 0 11 7"><path d="M0,0 H11 L5.5,6.5Z" fill="#9aa0a6"/></svg><div class="t" style="left:861.40px;top:493.99px;font-size:11px;line-height:11px;transform:scaleX(0.8462);transform-origin:0 0;color:#f0f1f2;">mean_intensity</div><div class="a" style="left:773px;top:513px;width:240px;height:19px;background:#414851;border-radius:2px"></div>
<svg style="left:996px;top:519px" width="11" height="7" viewBox="0 0 11 7"><path d="M0,0 H11 L5.5,6.5Z" fill="#9aa0a6"/></svg><div class="a" style="left:533px;top:537px;width:480px;height:18px;background:#414851;border-radius:2px"></div><div class="t" style="left:690.00px;top:540.99px;font-size:11px;line-height:11px;transform:scaleX(0.8381);transform-origin:0 0;">Update Axes/Clustering Selection Boxes</div><div class="a" style="left:533px;top:560px;width:480px;height:18px;background:#414851;border-radius:2px"></div><div class="t" style="left:763.90px;top:564.29px;font-size:11px;line-height:11px;transform:scaleX(0.8028);transform-origin:0 0;">Run</div>
<div class="t" style="left:755.50px;top:596.39px;font-size:11px;line-height:11px;transform:scaleX(0.9416);transform-origin:0 0;">enter paint or fill mode to edit labels</div>
<svg style="left:951px;top:597px" width="9" height="5" viewBox="0 0 9 5"><path d="M0,5 L4.5,0 L9,5Z" fill="#f0f1f2"/></svg>
<div class="t" style="left:963.00px;top:596.39px;font-size:11px;line-height:11px;transform:scaleX(0.9816);transform-origin:0 0;">activity</div>
</body></html>
